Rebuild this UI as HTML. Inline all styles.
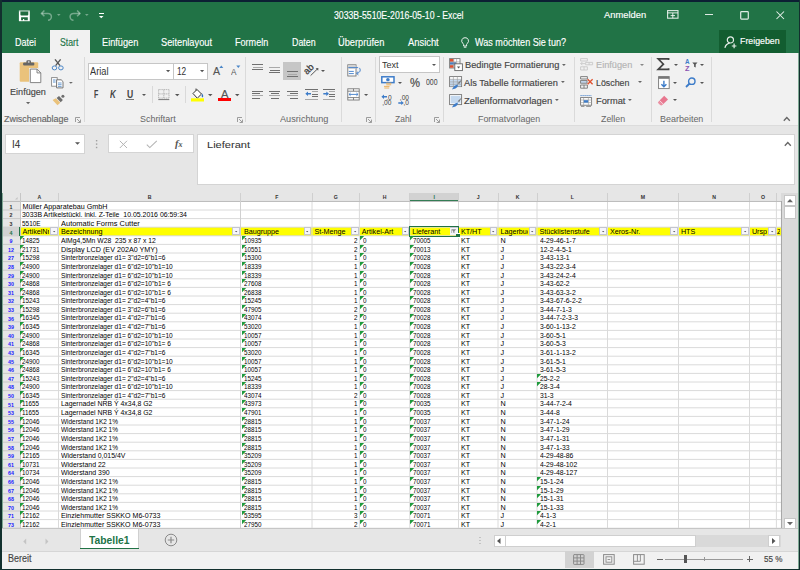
<!DOCTYPE html><html><head><meta charset="utf-8"><style>
*{margin:0;padding:0;box-sizing:border-box}
html,body{width:800px;height:570px;overflow:hidden;background:#217346;font-family:"Liberation Sans",sans-serif}
.a{position:absolute}
.t{position:absolute;white-space:nowrap;line-height:1;transform-origin:0 0}
svg{position:absolute;overflow:visible}
</style></head><body>
<div class="a" style="left:0;top:0;width:800px;height:570px;overflow:hidden;background:#217346">
<div class="a" style="left:0px;top:0px;width:800px;height:53px;background:#217346;"></div>
<div class="t" style="left:334.40px;top:11px;font-size:10.25px;color:#fff;transform:scaleX(0.848);-webkit-text-stroke:0.15px currentColor;">3033B-5510E-2016-05-10 - Excel</div>
<div class="t" style="left:604.00px;top:10px;font-size:9.95px;color:#fff;transform:scaleX(0.943);-webkit-text-stroke:0.15px currentColor;">Anmelden</div>
<div class="a" style="left:50px;top:30px;width:40px;height:24px;background:#f1f1f1;"></div>
<div class="t" style="left:14.90px;top:37px;font-size:10.75px;color:#fff;transform:scaleX(0.837);-webkit-text-stroke:0.15px currentColor;">Datei</div>
<div class="t" style="left:60.20px;top:37px;font-size:10.75px;color:#217346;transform:scaleX(0.811);-webkit-text-stroke:0.15px currentColor;">Start</div>
<div class="t" style="left:101.90px;top:37px;font-size:10.75px;color:#fff;transform:scaleX(0.857);-webkit-text-stroke:0.15px currentColor;">Einfügen</div>
<div class="t" style="left:160.80px;top:37px;font-size:10.75px;color:#fff;transform:scaleX(0.863);-webkit-text-stroke:0.15px currentColor;">Seitenlayout</div>
<div class="t" style="left:234.80px;top:37px;font-size:10.75px;color:#fff;transform:scaleX(0.844);-webkit-text-stroke:0.15px currentColor;">Formeln</div>
<div class="t" style="left:291.80px;top:37px;font-size:10.75px;color:#fff;transform:scaleX(0.822);-webkit-text-stroke:0.15px currentColor;">Daten</div>
<div class="t" style="left:338.40px;top:37px;font-size:10.75px;color:#fff;transform:scaleX(0.861);-webkit-text-stroke:0.15px currentColor;">Überprüfen</div>
<div class="t" style="left:408.30px;top:37px;font-size:10.75px;color:#fff;transform:scaleX(0.871);-webkit-text-stroke:0.15px currentColor;">Ansicht</div>
<div class="t" style="left:475.10px;top:37px;font-size:10.75px;color:#fff;transform:scaleX(0.845);-webkit-text-stroke:0.15px currentColor;">Was möchten Sie tun?</div>
<div class="a" style="left:719px;top:30px;width:67px;height:22.5px;background:#125d30;"></div>
<div class="t" style="left:739.50px;top:36px;font-size:9.45px;color:#fff;transform:scaleX(0.933);-webkit-text-stroke:0.15px currentColor;">Freigeben</div>
<div class="a" style="left:1px;top:53px;width:798px;height:71.5px;background:#f1f1f1;"></div>
<div class="a" style="left:1px;top:124.5px;width:798px;height:1px;background:#dcdcdc;"></div>
<div class="a" style="left:1px;top:125.5px;width:798px;height:404px;background:#e6e6e6;"></div>
<div class="a" style="left:5.25px;top:134px;width:79.75px;height:19.5px;background:#fff;border:1px solid #d4d4d4"></div>
<div class="t" style="left:11.50px;top:140px;font-size:10.15px;color:#333;transform:scaleX(0.973);-webkit-text-stroke:0.15px currentColor;-webkit-text-stroke:0.05px currentColor;">I4</div>
<div class="a" style="left:108.4px;top:134.4px;width:85.9px;height:19.1px;background:#fff;border:1px solid #d4d4d4"></div>
<div class="a" style="left:197.1px;top:134.4px;width:598px;height:51px;background:#fff;border:1px solid #d4d4d4"></div>
<div class="t" style="left:206.80px;top:140px;font-size:9.5px;color:#333;transform:scaleX(1.166);-webkit-text-stroke:0.15px currentColor;-webkit-text-stroke:0.05px currentColor;">Lieferant</div>
<svg style="left:74.5px;top:142px" width="6" height="4"><path d="M0 0.3H5L2.5 2.8Z" fill="#555"/></svg>
<svg style="left:95px;top:139px" width="4" height="11"><rect x="0.9" y="1" width="1.4" height="1.4" fill="#a0a0a0"/><rect x="0.9" y="4.4" width="1.4" height="1.4" fill="#a0a0a0"/><rect x="0.9" y="7.8" width="1.4" height="1.4" fill="#a0a0a0"/></svg>
<svg style="left:119px;top:139.8px" width="10" height="9"><path d="M0.8 0.8L8 8M8 0.8L0.8 8" stroke="#b4b4b4" stroke-width="1"/></svg>
<svg style="left:146px;top:139.8px" width="12" height="9"><path d="M0.8 4.6L3.8 7.6L10.8 0.8" fill="none" stroke="#b4b4b4" stroke-width="1.1"/></svg>
<div class="t" style="left:175px;top:139px;font-family:Liberation Serif;font-style:italic;font-weight:bold;font-size:10.5px;color:#555">f<span style="font-size:8px">x</span></div>
<div class="a" style="left:2px;top:193px;width:781px;height:8.4px;background:#e6e6e6;"></div>
<div class="a" style="left:409.8px;top:193px;width:48.69999999999999px;height:8.4px;background:#d2d2d2;"></div>
<div class="a" style="left:409.8px;top:199.6px;width:48.69999999999999px;height:1.8px;background:#217346;"></div>
<div class="a" style="left:2px;top:201.4px;width:18px;height:326.80000000000007px;background:#e6e6e6;"></div>
<div class="a" style="left:20px;top:201.4px;width:762.5px;height:326.80000000000007px;background:#fff;"></div>
<div class="a" style="left:20px;top:227.2px;width:762.5px;height:8.6px;background:#ffff00;"></div>
<svg style="left:0;top:0" width="800" height="570"><path d="M20 201.40H782.4M20 210.00H782.4M20 218.60H782.4M20 227.20H782.4M20 235.80H782.4M20 244.40H782.4M20 253.00H782.4M20 261.60H782.4M20 270.20H782.4M20 278.80H782.4M20 287.40H782.4M20 296.00H782.4M20 304.60H782.4M20 313.20H782.4M20 321.80H782.4M20 330.40H782.4M20 339.00H782.4M20 347.60H782.4M20 356.20H782.4M20 364.80H782.4M20 373.40H782.4M20 382.00H782.4M20 390.60H782.4M20 399.20H782.4M20 407.80H782.4M20 416.40H782.4M20 425.00H782.4M20 433.60H782.4M20 442.20H782.4M20 450.80H782.4M20 459.40H782.4M20 468.00H782.4M20 476.60H782.4M20 485.20H782.4M20 493.80H782.4M20 502.40H782.4M20 511.00H782.4M20 519.60H782.4M20 528.20H782.4M58.50 218.60V528.20M240.50 201.40V528.20M312.00 201.40V528.20M359.40 201.40V528.20M409.80 201.40V528.20M458.50 201.40V528.20M498.00 201.40V528.20M537.00 201.40V528.20M607.50 201.40V528.20M678.50 201.40V528.20M749.50 201.40V528.20M776.40 201.40V528.20M781.40 201.40V528.20" stroke="#dadada" stroke-width="1" fill="none"/><path d="M2 201.40H20M2 210.00H20M2 218.60H20M2 227.20H20M2 235.80H20M2 244.40H20M2 253.00H20M2 261.60H20M2 270.20H20M2 278.80H20M2 287.40H20M2 296.00H20M2 304.60H20M2 313.20H20M2 321.80H20M2 330.40H20M2 339.00H20M2 347.60H20M2 356.20H20M2 364.80H20M2 373.40H20M2 382.00H20M2 390.60H20M2 399.20H20M2 407.80H20M2 416.40H20M2 425.00H20M2 433.60H20M2 442.20H20M2 450.80H20M2 459.40H20M2 468.00H20M2 476.60H20M2 485.20H20M2 493.80H20M2 502.40H20M2 511.00H20M2 519.60H20M2 528.20H20" stroke="#c8c8c8" stroke-width="1" fill="none"/></svg>
<div class="a" style="left:2px;top:200.80px;width:779.4px;height:1.2px;background:#bdbdbd"></div>
<div class="a" style="left:19.5px;top:193px;width:1px;height:335.2px;background:#c6c6c6"></div>
<div class="a" style="left:58.0px;top:193px;width:1px;height:8.4px;background:#cfcfcf"></div>
<div class="a" style="left:240.0px;top:193px;width:1px;height:8.4px;background:#cfcfcf"></div>
<div class="a" style="left:311.5px;top:193px;width:1px;height:8.4px;background:#cfcfcf"></div>
<div class="a" style="left:358.9px;top:193px;width:1px;height:8.4px;background:#cfcfcf"></div>
<div class="a" style="left:409.3px;top:193px;width:1px;height:8.4px;background:#cfcfcf"></div>
<div class="a" style="left:458.0px;top:193px;width:1px;height:8.4px;background:#cfcfcf"></div>
<div class="a" style="left:497.5px;top:193px;width:1px;height:8.4px;background:#cfcfcf"></div>
<div class="a" style="left:536.5px;top:193px;width:1px;height:8.4px;background:#cfcfcf"></div>
<div class="a" style="left:607.0px;top:193px;width:1px;height:8.4px;background:#cfcfcf"></div>
<div class="a" style="left:678.0px;top:193px;width:1px;height:8.4px;background:#cfcfcf"></div>
<div class="a" style="left:749.0px;top:193px;width:1px;height:8.4px;background:#cfcfcf"></div>
<div class="a" style="left:775.9px;top:193px;width:1px;height:8.4px;background:#cfcfcf"></div>
<div class="a" style="left:780.9px;top:193px;width:1px;height:8.4px;background:#cfcfcf"></div>
<div class="a" style="left:240px;top:193px;width:1px;height:335.2px;background:#d0d0d0"></div>
<div class="a" style="left:2px;top:227.7px;width:17.5px;height:7.6px;background:#d2d2d2;"></div>
<div class="a" style="left:18.5px;top:227.2px;width:1.5px;height:8.6px;background:#217346;"></div>
<svg style="left:15px;top:196.5px" width="4" height="4"><path d="M2.6 0V2.6H0Z" fill="#c4c4c4"/></svg>
<div class="a" style="left:1.5px;top:193px;width:0.6px;height:376px;background:#7fa894;"></div>
<div class="t" style="left:37.38px;top:195px;font-size:5.2px;color:#333;font-weight:bold;">A</div>
<div class="t" style="left:147.63px;top:195px;font-size:5.2px;color:#333;font-weight:bold;">B</div>
<div class="t" style="left:275.16px;top:195px;font-size:5.2px;color:#333;font-weight:bold;">F</div>
<div class="t" style="left:333.67px;top:195px;font-size:5.2px;color:#333;font-weight:bold;">G</div>
<div class="t" style="left:382.73px;top:195px;font-size:5.2px;color:#333;font-weight:bold;">H</div>
<div class="t" style="left:433.42px;top:195px;font-size:5.2px;color:#217346;font-weight:bold;">I</div>
<div class="t" style="left:476.81px;top:195px;font-size:5.2px;color:#333;font-weight:bold;">J</div>
<div class="t" style="left:515.63px;top:195px;font-size:5.2px;color:#333;font-weight:bold;">K</div>
<div class="t" style="left:570.66px;top:195px;font-size:5.2px;color:#333;font-weight:bold;">L</div>
<div class="t" style="left:640.83px;top:195px;font-size:5.2px;color:#333;font-weight:bold;">M</div>
<div class="t" style="left:712.13px;top:195px;font-size:5.2px;color:#333;font-weight:bold;">N</div>
<div class="t" style="left:760.92px;top:195px;font-size:5.2px;color:#333;font-weight:bold;">O</div>
<div class="t" style="left:9.53px;top:205px;font-size:5.3px;color:#333;font-weight:bold;">1</div>
<div class="t" style="left:9.53px;top:213px;font-size:5.3px;color:#333;font-weight:bold;">2</div>
<div class="t" style="left:9.53px;top:222px;font-size:5.3px;color:#333;font-weight:bold;">3</div>
<div class="t" style="left:9.53px;top:231px;font-size:5.3px;color:#217346;font-weight:bold;">4</div>
<div class="t" style="left:9.53px;top:239px;font-size:5.3px;color:#1a1aff;font-weight:bold;">9</div>
<div class="t" style="left:8.06px;top:248px;font-size:5.3px;color:#1a1aff;font-weight:bold;">12</div>
<div class="t" style="left:8.06px;top:256px;font-size:5.3px;color:#1a1aff;font-weight:bold;">27</div>
<div class="t" style="left:8.06px;top:265px;font-size:5.3px;color:#1a1aff;font-weight:bold;">28</div>
<div class="t" style="left:8.06px;top:274px;font-size:5.3px;color:#1a1aff;font-weight:bold;">29</div>
<div class="t" style="left:8.06px;top:282px;font-size:5.3px;color:#1a1aff;font-weight:bold;">30</div>
<div class="t" style="left:8.06px;top:291px;font-size:5.3px;color:#1a1aff;font-weight:bold;">31</div>
<div class="t" style="left:8.06px;top:299px;font-size:5.3px;color:#1a1aff;font-weight:bold;">32</div>
<div class="t" style="left:8.06px;top:308px;font-size:5.3px;color:#1a1aff;font-weight:bold;">33</div>
<div class="t" style="left:8.06px;top:317px;font-size:5.3px;color:#1a1aff;font-weight:bold;">36</div>
<div class="t" style="left:8.06px;top:325px;font-size:5.3px;color:#1a1aff;font-weight:bold;">39</div>
<div class="t" style="left:8.06px;top:334px;font-size:5.3px;color:#1a1aff;font-weight:bold;">40</div>
<div class="t" style="left:8.06px;top:342px;font-size:5.3px;color:#1a1aff;font-weight:bold;">41</div>
<div class="t" style="left:8.06px;top:351px;font-size:5.3px;color:#1a1aff;font-weight:bold;">43</div>
<div class="t" style="left:8.06px;top:360px;font-size:5.3px;color:#1a1aff;font-weight:bold;">45</div>
<div class="t" style="left:8.06px;top:368px;font-size:5.3px;color:#1a1aff;font-weight:bold;">46</div>
<div class="t" style="left:8.06px;top:377px;font-size:5.3px;color:#1a1aff;font-weight:bold;">47</div>
<div class="t" style="left:8.06px;top:385px;font-size:5.3px;color:#1a1aff;font-weight:bold;">48</div>
<div class="t" style="left:8.06px;top:394px;font-size:5.3px;color:#1a1aff;font-weight:bold;">50</div>
<div class="t" style="left:8.06px;top:403px;font-size:5.3px;color:#1a1aff;font-weight:bold;">51</div>
<div class="t" style="left:8.06px;top:411px;font-size:5.3px;color:#1a1aff;font-weight:bold;">53</div>
<div class="t" style="left:8.06px;top:420px;font-size:5.3px;color:#1a1aff;font-weight:bold;">55</div>
<div class="t" style="left:8.06px;top:428px;font-size:5.3px;color:#1a1aff;font-weight:bold;">56</div>
<div class="t" style="left:8.06px;top:437px;font-size:5.3px;color:#1a1aff;font-weight:bold;">57</div>
<div class="t" style="left:8.06px;top:446px;font-size:5.3px;color:#1a1aff;font-weight:bold;">58</div>
<div class="t" style="left:8.06px;top:454px;font-size:5.3px;color:#1a1aff;font-weight:bold;">59</div>
<div class="t" style="left:8.06px;top:463px;font-size:5.3px;color:#1a1aff;font-weight:bold;">61</div>
<div class="t" style="left:8.06px;top:471px;font-size:5.3px;color:#1a1aff;font-weight:bold;">64</div>
<div class="t" style="left:8.06px;top:480px;font-size:5.3px;color:#1a1aff;font-weight:bold;">66</div>
<div class="t" style="left:8.06px;top:489px;font-size:5.3px;color:#1a1aff;font-weight:bold;">67</div>
<div class="t" style="left:8.06px;top:497px;font-size:5.3px;color:#1a1aff;font-weight:bold;">68</div>
<div class="t" style="left:8.06px;top:506px;font-size:5.3px;color:#1a1aff;font-weight:bold;">70</div>
<div class="t" style="left:8.06px;top:514px;font-size:5.3px;color:#1a1aff;font-weight:bold;">71</div>
<div class="t" style="left:8.06px;top:523px;font-size:5.3px;color:#1a1aff;font-weight:bold;">73</div>
<div class="t" style="left:22.40px;top:203px;font-size:7.2px;color:#000;">Müller Apparatebau GmbH</div>
<div class="t" style="left:22.40px;top:211px;font-size:7.2px;color:#000;transform:scaleX(0.964);">3033B Artikelstückl. inkl. Z-Teile&nbsp; 10.05.2016 06:59:34</div>
<div class="t" style="left:22.40px;top:220px;font-size:7.2px;color:#000;transform:scaleX(0.894);">5510E</div>
<div class="t" style="left:61.00px;top:220px;font-size:7.2px;color:#000;transform:scaleX(1.039);">Automatic Forms Cutter</div>
<div class="a" style="left:20px;top:227.20px;width:29.00px;height:8.60px;overflow:hidden">
<div class="t" style="left:2.40px;top:1px;font-size:7.2px;color:#000;">ArtikelNr</div>
</div>
<div class="a" style="left:50.30px;top:226.80px;width:7.5px;height:8.6px;background:#f6f6fa;border:0.8px solid #c4c6d0"></div>
<svg style="left:52.90px;top:230.80px" width="3" height="2"><path d="M0 0H2.4L1.2 1.3Z" fill="#555"/></svg>
<div class="a" style="left:58.5px;top:227.20px;width:172.50px;height:8.60px;overflow:hidden">
<div class="t" style="left:2.40px;top:1px;font-size:7.2px;color:#000;">Bezeichnung</div>
</div>
<div class="a" style="left:232.30px;top:226.80px;width:7.5px;height:8.6px;background:#f6f6fa;border:0.8px solid #c4c6d0"></div>
<svg style="left:234.90px;top:230.80px" width="3" height="2"><path d="M0 0H2.4L1.2 1.3Z" fill="#555"/></svg>
<div class="a" style="left:241.5px;top:227.20px;width:61.00px;height:8.60px;overflow:hidden">
<div class="t" style="left:2.40px;top:1px;font-size:7.2px;color:#000;">Baugruppe</div>
</div>
<div class="a" style="left:303.80px;top:226.80px;width:7.5px;height:8.6px;background:#f6f6fa;border:0.8px solid #c4c6d0"></div>
<svg style="left:306.40px;top:230.80px" width="3" height="2"><path d="M0 0H2.4L1.2 1.3Z" fill="#555"/></svg>
<div class="a" style="left:312px;top:227.20px;width:37.90px;height:8.60px;overflow:hidden">
<div class="t" style="left:2.40px;top:1px;font-size:7.2px;color:#000;">St-Menge</div>
</div>
<div class="a" style="left:351.20px;top:226.80px;width:7.5px;height:8.6px;background:#f6f6fa;border:0.8px solid #c4c6d0"></div>
<svg style="left:353.80px;top:230.80px" width="3" height="2"><path d="M0 0H2.4L1.2 1.3Z" fill="#555"/></svg>
<div class="a" style="left:359.4px;top:227.20px;width:40.90px;height:8.60px;overflow:hidden">
<div class="t" style="left:2.40px;top:1px;font-size:7.2px;color:#000;">Artikel-Art</div>
</div>
<div class="a" style="left:401.60px;top:226.80px;width:7.5px;height:8.6px;background:#f6f6fa;border:0.8px solid #c4c6d0"></div>
<svg style="left:404.20px;top:230.80px" width="3" height="2"><path d="M0 0H2.4L1.2 1.3Z" fill="#555"/></svg>
<div class="a" style="left:409.8px;top:227.20px;width:39.20px;height:8.60px;overflow:hidden">
<div class="t" style="left:2.40px;top:1px;font-size:7.2px;color:#000;">Lieferant</div>
</div>
<div class="a" style="left:450.30px;top:226.80px;width:7.5px;height:8.6px;background:#f6f6fa;border:0.8px solid #c4c6d0"></div>
<div class="a" style="left:449.5px;top:227.6px;width:8px;height:7.4px;background:#f4f4f8"></div>
<svg style="left:451px;top:229px" width="6" height="5"><path d="M0.3 0.3H5.2L3.4 2.2V4.2L2.2 3.6V2.2Z" fill="#888"/><path d="M0.6 0.6V4" stroke="#aaa" stroke-width="0.8"/></svg>
<div class="a" style="left:458.5px;top:227.20px;width:30.00px;height:8.60px;overflow:hidden">
<div class="t" style="left:2.40px;top:1px;font-size:7.2px;color:#000;">KT/HT</div>
</div>
<div class="a" style="left:489.80px;top:226.80px;width:7.5px;height:8.6px;background:#f6f6fa;border:0.8px solid #c4c6d0"></div>
<svg style="left:492.40px;top:230.80px" width="3" height="2"><path d="M0 0H2.4L1.2 1.3Z" fill="#555"/></svg>
<div class="a" style="left:498px;top:227.20px;width:29.50px;height:8.60px;overflow:hidden">
<div class="t" style="left:2.40px;top:1px;font-size:7.2px;color:#000;">Lagerbuch</div>
</div>
<div class="a" style="left:528.80px;top:226.80px;width:7.5px;height:8.6px;background:#f6f6fa;border:0.8px solid #c4c6d0"></div>
<svg style="left:531.40px;top:230.80px" width="3" height="2"><path d="M0 0H2.4L1.2 1.3Z" fill="#555"/></svg>
<div class="a" style="left:537px;top:227.20px;width:61.00px;height:8.60px;overflow:hidden">
<div class="t" style="left:2.40px;top:1px;font-size:7.2px;color:#000;">Stücklistenstufe</div>
</div>
<div class="a" style="left:599.30px;top:226.80px;width:7.5px;height:8.6px;background:#f6f6fa;border:0.8px solid #c4c6d0"></div>
<svg style="left:601.90px;top:230.80px" width="3" height="2"><path d="M0 0H2.4L1.2 1.3Z" fill="#555"/></svg>
<div class="a" style="left:607.5px;top:227.20px;width:61.50px;height:8.60px;overflow:hidden">
<div class="t" style="left:2.40px;top:1px;font-size:7.2px;color:#000;">Xeros-Nr.</div>
</div>
<div class="a" style="left:670.30px;top:226.80px;width:7.5px;height:8.6px;background:#f6f6fa;border:0.8px solid #c4c6d0"></div>
<svg style="left:672.90px;top:230.80px" width="3" height="2"><path d="M0 0H2.4L1.2 1.3Z" fill="#555"/></svg>
<div class="a" style="left:678.5px;top:227.20px;width:61.50px;height:8.60px;overflow:hidden">
<div class="t" style="left:2.40px;top:1px;font-size:7.2px;color:#000;">HTS</div>
</div>
<div class="a" style="left:741.30px;top:226.80px;width:7.5px;height:8.6px;background:#f6f6fa;border:0.8px solid #c4c6d0"></div>
<svg style="left:743.90px;top:230.80px" width="3" height="2"><path d="M0 0H2.4L1.2 1.3Z" fill="#555"/></svg>
<div class="a" style="left:749.5px;top:227.20px;width:17.40px;height:8.60px;overflow:hidden">
<div class="t" style="left:2.40px;top:1px;font-size:7.2px;color:#000;">Ursprung</div>
</div>
<div class="a" style="left:768.20px;top:226.80px;width:7.5px;height:8.6px;background:#f6f6fa;border:0.8px solid #c4c6d0"></div>
<svg style="left:770.80px;top:230.80px" width="3" height="2"><path d="M0 0H2.4L1.2 1.3Z" fill="#555"/></svg>
<div class="a" style="left:776.4px;top:227.20px;width:4.00px;height:8.60px;overflow:hidden">
<div class="t" style="left:0.60px;top:1px;font-size:7.2px;color:#000;">Zolltarif</div>
</div>
<div class="a" style="left:409.20px;top:226px;width:49.90px;height:10.7px;border:1.1px solid #217346"></div>
<div class="a" style="left:455.6px;top:233.3px;width:4.6px;height:4.6px;background:#fff"></div>
<div class="a" style="left:456.1px;top:233.75px;width:3.8px;height:3.7px;background:#217346"></div>
<svg style="left:20.2px;top:236.10px" width="5" height="5"><path d="M0 0H4.2L0 4.2Z" fill="#1e9a3c"/></svg>
<div class="t" style="left:22.40px;top:237px;font-size:7.2px;color:#000;transform:scaleX(0.875);">14825</div>
<div class="t" style="left:61.00px;top:237px;font-size:7.2px;color:#000;transform:scaleX(0.946);">AlMg4,5Mn W28&nbsp; 235 x 87 x 12</div>
<svg style="left:241.7px;top:236.10px" width="5" height="5"><path d="M0 0H4.2L0 4.2Z" fill="#1e9a3c"/></svg>
<div class="t" style="left:243.50px;top:237px;font-size:7.2px;color:#000;transform:scaleX(0.875);">10935</div>
<div class="t" style="left:354.40px;top:237px;font-size:7.2px;color:#000;transform:scaleX(0.875);">2</div>
<svg style="left:359.59999999999997px;top:236.10px" width="5" height="5"><path d="M0 0H4.2L0 4.2Z" fill="#1e9a3c"/></svg>
<div class="t" style="left:362.50px;top:237px;font-size:7.2px;color:#000;transform:scaleX(0.875);">0</div>
<svg style="left:410.0px;top:236.10px" width="5" height="5"><path d="M0 0H4.2L0 4.2Z" fill="#1e9a3c"/></svg>
<div class="t" style="left:412.50px;top:237px;font-size:7.2px;color:#000;transform:scaleX(0.875);">70005</div>
<div class="t" style="left:461.00px;top:237px;font-size:7.2px;color:#000;">KT</div>
<div class="t" style="left:500.50px;top:237px;font-size:7.2px;color:#000;">N</div>
<div class="t" style="left:539.50px;top:237px;font-size:7.2px;color:#000;transform:scaleX(0.950);">4-29-46-1-7</div>
<svg style="left:20.2px;top:244.70px" width="5" height="5"><path d="M0 0H4.2L0 4.2Z" fill="#1e9a3c"/></svg>
<div class="t" style="left:22.40px;top:246px;font-size:7.2px;color:#000;transform:scaleX(0.875);">21731</div>
<div class="t" style="left:61.00px;top:246px;font-size:7.2px;color:#000;">Display LCD (EV 202A0 YMY)</div>
<svg style="left:241.7px;top:244.70px" width="5" height="5"><path d="M0 0H4.2L0 4.2Z" fill="#1e9a3c"/></svg>
<div class="t" style="left:243.50px;top:246px;font-size:7.2px;color:#000;transform:scaleX(0.875);">10551</div>
<div class="t" style="left:354.40px;top:246px;font-size:7.2px;color:#000;transform:scaleX(0.875);">2</div>
<svg style="left:359.59999999999997px;top:244.70px" width="5" height="5"><path d="M0 0H4.2L0 4.2Z" fill="#1e9a3c"/></svg>
<div class="t" style="left:362.50px;top:246px;font-size:7.2px;color:#000;transform:scaleX(0.875);">0</div>
<svg style="left:410.0px;top:244.70px" width="5" height="5"><path d="M0 0H4.2L0 4.2Z" fill="#1e9a3c"/></svg>
<div class="t" style="left:412.50px;top:246px;font-size:7.2px;color:#000;transform:scaleX(0.875);">70013</div>
<div class="t" style="left:461.00px;top:246px;font-size:7.2px;color:#000;">KT</div>
<div class="t" style="left:500.50px;top:246px;font-size:7.2px;color:#000;">J</div>
<div class="t" style="left:539.50px;top:246px;font-size:7.2px;color:#000;transform:scaleX(0.950);">12-2-4-5-1</div>
<svg style="left:20.2px;top:253.30px" width="5" height="5"><path d="M0 0H4.2L0 4.2Z" fill="#1e9a3c"/></svg>
<div class="t" style="left:22.40px;top:254px;font-size:7.2px;color:#000;transform:scaleX(0.875);">15298</div>
<div class="t" style="left:61.00px;top:254px;font-size:7.2px;color:#000;transform:scaleX(0.913);">Sinterbronzelager d1= 3"d2=6"b1=6</div>
<svg style="left:241.7px;top:253.30px" width="5" height="5"><path d="M0 0H4.2L0 4.2Z" fill="#1e9a3c"/></svg>
<div class="t" style="left:243.50px;top:254px;font-size:7.2px;color:#000;transform:scaleX(0.875);">15300</div>
<div class="t" style="left:354.40px;top:254px;font-size:7.2px;color:#000;transform:scaleX(0.875);">1</div>
<svg style="left:359.59999999999997px;top:253.30px" width="5" height="5"><path d="M0 0H4.2L0 4.2Z" fill="#1e9a3c"/></svg>
<div class="t" style="left:362.50px;top:254px;font-size:7.2px;color:#000;transform:scaleX(0.875);">0</div>
<svg style="left:410.0px;top:253.30px" width="5" height="5"><path d="M0 0H4.2L0 4.2Z" fill="#1e9a3c"/></svg>
<div class="t" style="left:412.50px;top:254px;font-size:7.2px;color:#000;transform:scaleX(0.875);">70028</div>
<div class="t" style="left:461.00px;top:254px;font-size:7.2px;color:#000;">KT</div>
<div class="t" style="left:500.50px;top:254px;font-size:7.2px;color:#000;">J</div>
<div class="t" style="left:539.50px;top:254px;font-size:7.2px;color:#000;transform:scaleX(0.950);">3-43-13-1</div>
<svg style="left:20.2px;top:261.90px" width="5" height="5"><path d="M0 0H4.2L0 4.2Z" fill="#1e9a3c"/></svg>
<div class="t" style="left:22.40px;top:263px;font-size:7.2px;color:#000;transform:scaleX(0.875);">24900</div>
<div class="t" style="left:61.00px;top:263px;font-size:7.2px;color:#000;transform:scaleX(0.913);">Sinterbronzelager d1= 6"d2=10"b1=10</div>
<svg style="left:241.7px;top:261.90px" width="5" height="5"><path d="M0 0H4.2L0 4.2Z" fill="#1e9a3c"/></svg>
<div class="t" style="left:243.50px;top:263px;font-size:7.2px;color:#000;transform:scaleX(0.875);">18339</div>
<div class="t" style="left:354.40px;top:263px;font-size:7.2px;color:#000;transform:scaleX(0.875);">1</div>
<svg style="left:359.59999999999997px;top:261.90px" width="5" height="5"><path d="M0 0H4.2L0 4.2Z" fill="#1e9a3c"/></svg>
<div class="t" style="left:362.50px;top:263px;font-size:7.2px;color:#000;transform:scaleX(0.875);">0</div>
<svg style="left:410.0px;top:261.90px" width="5" height="5"><path d="M0 0H4.2L0 4.2Z" fill="#1e9a3c"/></svg>
<div class="t" style="left:412.50px;top:263px;font-size:7.2px;color:#000;transform:scaleX(0.875);">70028</div>
<div class="t" style="left:461.00px;top:263px;font-size:7.2px;color:#000;">KT</div>
<div class="t" style="left:500.50px;top:263px;font-size:7.2px;color:#000;">J</div>
<div class="t" style="left:539.50px;top:263px;font-size:7.2px;color:#000;transform:scaleX(0.950);">3-43-22-3-4</div>
<svg style="left:20.2px;top:270.50px" width="5" height="5"><path d="M0 0H4.2L0 4.2Z" fill="#1e9a3c"/></svg>
<div class="t" style="left:22.40px;top:272px;font-size:7.2px;color:#000;transform:scaleX(0.875);">24900</div>
<div class="t" style="left:61.00px;top:272px;font-size:7.2px;color:#000;transform:scaleX(0.913);">Sinterbronzelager d1= 6"d2=10"b1=10</div>
<svg style="left:241.7px;top:270.50px" width="5" height="5"><path d="M0 0H4.2L0 4.2Z" fill="#1e9a3c"/></svg>
<div class="t" style="left:243.50px;top:272px;font-size:7.2px;color:#000;transform:scaleX(0.875);">18339</div>
<div class="t" style="left:354.40px;top:272px;font-size:7.2px;color:#000;transform:scaleX(0.875);">1</div>
<svg style="left:359.59999999999997px;top:270.50px" width="5" height="5"><path d="M0 0H4.2L0 4.2Z" fill="#1e9a3c"/></svg>
<div class="t" style="left:362.50px;top:272px;font-size:7.2px;color:#000;transform:scaleX(0.875);">0</div>
<svg style="left:410.0px;top:270.50px" width="5" height="5"><path d="M0 0H4.2L0 4.2Z" fill="#1e9a3c"/></svg>
<div class="t" style="left:412.50px;top:272px;font-size:7.2px;color:#000;transform:scaleX(0.875);">70028</div>
<div class="t" style="left:461.00px;top:272px;font-size:7.2px;color:#000;">KT</div>
<div class="t" style="left:500.50px;top:272px;font-size:7.2px;color:#000;">J</div>
<div class="t" style="left:539.50px;top:272px;font-size:7.2px;color:#000;transform:scaleX(0.950);">3-43-24-2-4</div>
<svg style="left:20.2px;top:279.10px" width="5" height="5"><path d="M0 0H4.2L0 4.2Z" fill="#1e9a3c"/></svg>
<div class="t" style="left:22.40px;top:280px;font-size:7.2px;color:#000;transform:scaleX(0.875);">24868</div>
<div class="t" style="left:61.00px;top:280px;font-size:7.2px;color:#000;transform:scaleX(0.913);">Sinterbronzelager d1= 6"d2=10"b1= 6</div>
<svg style="left:241.7px;top:279.10px" width="5" height="5"><path d="M0 0H4.2L0 4.2Z" fill="#1e9a3c"/></svg>
<div class="t" style="left:243.50px;top:280px;font-size:7.2px;color:#000;transform:scaleX(0.875);">27608</div>
<div class="t" style="left:354.40px;top:280px;font-size:7.2px;color:#000;transform:scaleX(0.875);">1</div>
<svg style="left:359.59999999999997px;top:279.10px" width="5" height="5"><path d="M0 0H4.2L0 4.2Z" fill="#1e9a3c"/></svg>
<div class="t" style="left:362.50px;top:280px;font-size:7.2px;color:#000;transform:scaleX(0.875);">0</div>
<svg style="left:410.0px;top:279.10px" width="5" height="5"><path d="M0 0H4.2L0 4.2Z" fill="#1e9a3c"/></svg>
<div class="t" style="left:412.50px;top:280px;font-size:7.2px;color:#000;transform:scaleX(0.875);">70028</div>
<div class="t" style="left:461.00px;top:280px;font-size:7.2px;color:#000;">KT</div>
<div class="t" style="left:500.50px;top:280px;font-size:7.2px;color:#000;">J</div>
<div class="t" style="left:539.50px;top:280px;font-size:7.2px;color:#000;transform:scaleX(0.950);">3-43-62-2</div>
<svg style="left:20.2px;top:287.70px" width="5" height="5"><path d="M0 0H4.2L0 4.2Z" fill="#1e9a3c"/></svg>
<div class="t" style="left:22.40px;top:289px;font-size:7.2px;color:#000;transform:scaleX(0.875);">24868</div>
<div class="t" style="left:61.00px;top:289px;font-size:7.2px;color:#000;transform:scaleX(0.913);">Sinterbronzelager d1= 6"d2=10"b1= 6</div>
<svg style="left:241.7px;top:287.70px" width="5" height="5"><path d="M0 0H4.2L0 4.2Z" fill="#1e9a3c"/></svg>
<div class="t" style="left:243.50px;top:289px;font-size:7.2px;color:#000;transform:scaleX(0.875);">26838</div>
<div class="t" style="left:354.40px;top:289px;font-size:7.2px;color:#000;transform:scaleX(0.875);">1</div>
<svg style="left:359.59999999999997px;top:287.70px" width="5" height="5"><path d="M0 0H4.2L0 4.2Z" fill="#1e9a3c"/></svg>
<div class="t" style="left:362.50px;top:289px;font-size:7.2px;color:#000;transform:scaleX(0.875);">0</div>
<svg style="left:410.0px;top:287.70px" width="5" height="5"><path d="M0 0H4.2L0 4.2Z" fill="#1e9a3c"/></svg>
<div class="t" style="left:412.50px;top:289px;font-size:7.2px;color:#000;transform:scaleX(0.875);">70028</div>
<div class="t" style="left:461.00px;top:289px;font-size:7.2px;color:#000;">KT</div>
<div class="t" style="left:500.50px;top:289px;font-size:7.2px;color:#000;">J</div>
<div class="t" style="left:539.50px;top:289px;font-size:7.2px;color:#000;transform:scaleX(0.950);">3-43-63-3-2</div>
<svg style="left:20.2px;top:296.30px" width="5" height="5"><path d="M0 0H4.2L0 4.2Z" fill="#1e9a3c"/></svg>
<div class="t" style="left:22.40px;top:297px;font-size:7.2px;color:#000;transform:scaleX(0.875);">15243</div>
<div class="t" style="left:61.00px;top:297px;font-size:7.2px;color:#000;transform:scaleX(0.913);">Sinterbronzelager d1= 2"d2=4"b1=6</div>
<svg style="left:241.7px;top:296.30px" width="5" height="5"><path d="M0 0H4.2L0 4.2Z" fill="#1e9a3c"/></svg>
<div class="t" style="left:243.50px;top:297px;font-size:7.2px;color:#000;transform:scaleX(0.875);">15245</div>
<div class="t" style="left:354.40px;top:297px;font-size:7.2px;color:#000;transform:scaleX(0.875);">1</div>
<svg style="left:359.59999999999997px;top:296.30px" width="5" height="5"><path d="M0 0H4.2L0 4.2Z" fill="#1e9a3c"/></svg>
<div class="t" style="left:362.50px;top:297px;font-size:7.2px;color:#000;transform:scaleX(0.875);">0</div>
<svg style="left:410.0px;top:296.30px" width="5" height="5"><path d="M0 0H4.2L0 4.2Z" fill="#1e9a3c"/></svg>
<div class="t" style="left:412.50px;top:297px;font-size:7.2px;color:#000;transform:scaleX(0.875);">70028</div>
<div class="t" style="left:461.00px;top:297px;font-size:7.2px;color:#000;">KT</div>
<div class="t" style="left:500.50px;top:297px;font-size:7.2px;color:#000;">J</div>
<div class="t" style="left:539.50px;top:297px;font-size:7.2px;color:#000;transform:scaleX(0.950);">3-43-67-6-2-2</div>
<svg style="left:20.2px;top:304.90px" width="5" height="5"><path d="M0 0H4.2L0 4.2Z" fill="#1e9a3c"/></svg>
<div class="t" style="left:22.40px;top:306px;font-size:7.2px;color:#000;transform:scaleX(0.875);">15298</div>
<div class="t" style="left:61.00px;top:306px;font-size:7.2px;color:#000;transform:scaleX(0.913);">Sinterbronzelager d1= 3"d2=6"b1=6</div>
<svg style="left:241.7px;top:304.90px" width="5" height="5"><path d="M0 0H4.2L0 4.2Z" fill="#1e9a3c"/></svg>
<div class="t" style="left:243.50px;top:306px;font-size:7.2px;color:#000;transform:scaleX(0.875);">47905</div>
<div class="t" style="left:354.40px;top:306px;font-size:7.2px;color:#000;transform:scaleX(0.875);">2</div>
<svg style="left:359.59999999999997px;top:304.90px" width="5" height="5"><path d="M0 0H4.2L0 4.2Z" fill="#1e9a3c"/></svg>
<div class="t" style="left:362.50px;top:306px;font-size:7.2px;color:#000;transform:scaleX(0.875);">0</div>
<svg style="left:410.0px;top:304.90px" width="5" height="5"><path d="M0 0H4.2L0 4.2Z" fill="#1e9a3c"/></svg>
<div class="t" style="left:412.50px;top:306px;font-size:7.2px;color:#000;transform:scaleX(0.875);">70028</div>
<div class="t" style="left:461.00px;top:306px;font-size:7.2px;color:#000;">KT</div>
<div class="t" style="left:500.50px;top:306px;font-size:7.2px;color:#000;">J</div>
<div class="t" style="left:539.50px;top:306px;font-size:7.2px;color:#000;transform:scaleX(0.950);">3-44-7-1-3</div>
<svg style="left:20.2px;top:313.50px" width="5" height="5"><path d="M0 0H4.2L0 4.2Z" fill="#1e9a3c"/></svg>
<div class="t" style="left:22.40px;top:314px;font-size:7.2px;color:#000;transform:scaleX(0.875);">16345</div>
<div class="t" style="left:61.00px;top:314px;font-size:7.2px;color:#000;transform:scaleX(0.913);">Sinterbronzelager d1= 4"d2=7"b1=6</div>
<svg style="left:241.7px;top:313.50px" width="5" height="5"><path d="M0 0H4.2L0 4.2Z" fill="#1e9a3c"/></svg>
<div class="t" style="left:243.50px;top:314px;font-size:7.2px;color:#000;transform:scaleX(0.875);">43074</div>
<div class="t" style="left:354.40px;top:314px;font-size:7.2px;color:#000;transform:scaleX(0.875);">2</div>
<svg style="left:359.59999999999997px;top:313.50px" width="5" height="5"><path d="M0 0H4.2L0 4.2Z" fill="#1e9a3c"/></svg>
<div class="t" style="left:362.50px;top:314px;font-size:7.2px;color:#000;transform:scaleX(0.875);">0</div>
<svg style="left:410.0px;top:313.50px" width="5" height="5"><path d="M0 0H4.2L0 4.2Z" fill="#1e9a3c"/></svg>
<div class="t" style="left:412.50px;top:314px;font-size:7.2px;color:#000;transform:scaleX(0.875);">70028</div>
<div class="t" style="left:461.00px;top:314px;font-size:7.2px;color:#000;">KT</div>
<div class="t" style="left:500.50px;top:314px;font-size:7.2px;color:#000;">J</div>
<div class="t" style="left:539.50px;top:314px;font-size:7.2px;color:#000;transform:scaleX(0.950);">3-44-7-2-3-3</div>
<svg style="left:20.2px;top:322.10px" width="5" height="5"><path d="M0 0H4.2L0 4.2Z" fill="#1e9a3c"/></svg>
<div class="t" style="left:22.40px;top:323px;font-size:7.2px;color:#000;transform:scaleX(0.875);">16345</div>
<div class="t" style="left:61.00px;top:323px;font-size:7.2px;color:#000;transform:scaleX(0.913);">Sinterbronzelager d1= 4"d2=7"b1=6</div>
<svg style="left:241.7px;top:322.10px" width="5" height="5"><path d="M0 0H4.2L0 4.2Z" fill="#1e9a3c"/></svg>
<div class="t" style="left:243.50px;top:323px;font-size:7.2px;color:#000;transform:scaleX(0.875);">53020</div>
<div class="t" style="left:354.40px;top:323px;font-size:7.2px;color:#000;transform:scaleX(0.875);">1</div>
<svg style="left:359.59999999999997px;top:322.10px" width="5" height="5"><path d="M0 0H4.2L0 4.2Z" fill="#1e9a3c"/></svg>
<div class="t" style="left:362.50px;top:323px;font-size:7.2px;color:#000;transform:scaleX(0.875);">0</div>
<svg style="left:410.0px;top:322.10px" width="5" height="5"><path d="M0 0H4.2L0 4.2Z" fill="#1e9a3c"/></svg>
<div class="t" style="left:412.50px;top:323px;font-size:7.2px;color:#000;transform:scaleX(0.875);">70028</div>
<div class="t" style="left:461.00px;top:323px;font-size:7.2px;color:#000;">KT</div>
<div class="t" style="left:500.50px;top:323px;font-size:7.2px;color:#000;">J</div>
<div class="t" style="left:539.50px;top:323px;font-size:7.2px;color:#000;transform:scaleX(0.950);">3-60-1-13-2</div>
<svg style="left:20.2px;top:330.70px" width="5" height="5"><path d="M0 0H4.2L0 4.2Z" fill="#1e9a3c"/></svg>
<div class="t" style="left:22.40px;top:332px;font-size:7.2px;color:#000;transform:scaleX(0.875);">24900</div>
<div class="t" style="left:61.00px;top:332px;font-size:7.2px;color:#000;transform:scaleX(0.913);">Sinterbronzelager d1= 6"d2=10"b1=10</div>
<svg style="left:241.7px;top:330.70px" width="5" height="5"><path d="M0 0H4.2L0 4.2Z" fill="#1e9a3c"/></svg>
<div class="t" style="left:243.50px;top:332px;font-size:7.2px;color:#000;transform:scaleX(0.875);">10057</div>
<div class="t" style="left:354.40px;top:332px;font-size:7.2px;color:#000;transform:scaleX(0.875);">1</div>
<svg style="left:359.59999999999997px;top:330.70px" width="5" height="5"><path d="M0 0H4.2L0 4.2Z" fill="#1e9a3c"/></svg>
<div class="t" style="left:362.50px;top:332px;font-size:7.2px;color:#000;transform:scaleX(0.875);">0</div>
<svg style="left:410.0px;top:330.70px" width="5" height="5"><path d="M0 0H4.2L0 4.2Z" fill="#1e9a3c"/></svg>
<div class="t" style="left:412.50px;top:332px;font-size:7.2px;color:#000;transform:scaleX(0.875);">70028</div>
<div class="t" style="left:461.00px;top:332px;font-size:7.2px;color:#000;">KT</div>
<div class="t" style="left:500.50px;top:332px;font-size:7.2px;color:#000;">J</div>
<div class="t" style="left:539.50px;top:332px;font-size:7.2px;color:#000;transform:scaleX(0.950);">3-60-5-1</div>
<svg style="left:20.2px;top:339.30px" width="5" height="5"><path d="M0 0H4.2L0 4.2Z" fill="#1e9a3c"/></svg>
<div class="t" style="left:22.40px;top:340px;font-size:7.2px;color:#000;transform:scaleX(0.875);">24868</div>
<div class="t" style="left:61.00px;top:340px;font-size:7.2px;color:#000;transform:scaleX(0.913);">Sinterbronzelager d1= 6"d2=10"b1= 6</div>
<svg style="left:241.7px;top:339.30px" width="5" height="5"><path d="M0 0H4.2L0 4.2Z" fill="#1e9a3c"/></svg>
<div class="t" style="left:243.50px;top:340px;font-size:7.2px;color:#000;transform:scaleX(0.875);">10057</div>
<div class="t" style="left:354.40px;top:340px;font-size:7.2px;color:#000;transform:scaleX(0.875);">1</div>
<svg style="left:359.59999999999997px;top:339.30px" width="5" height="5"><path d="M0 0H4.2L0 4.2Z" fill="#1e9a3c"/></svg>
<div class="t" style="left:362.50px;top:340px;font-size:7.2px;color:#000;transform:scaleX(0.875);">0</div>
<svg style="left:410.0px;top:339.30px" width="5" height="5"><path d="M0 0H4.2L0 4.2Z" fill="#1e9a3c"/></svg>
<div class="t" style="left:412.50px;top:340px;font-size:7.2px;color:#000;transform:scaleX(0.875);">70028</div>
<div class="t" style="left:461.00px;top:340px;font-size:7.2px;color:#000;">KT</div>
<div class="t" style="left:500.50px;top:340px;font-size:7.2px;color:#000;">J</div>
<div class="t" style="left:539.50px;top:340px;font-size:7.2px;color:#000;transform:scaleX(0.950);">3-60-5-3</div>
<svg style="left:20.2px;top:347.90px" width="5" height="5"><path d="M0 0H4.2L0 4.2Z" fill="#1e9a3c"/></svg>
<div class="t" style="left:22.40px;top:349px;font-size:7.2px;color:#000;transform:scaleX(0.875);">16345</div>
<div class="t" style="left:61.00px;top:349px;font-size:7.2px;color:#000;transform:scaleX(0.913);">Sinterbronzelager d1= 4"d2=7"b1=6</div>
<svg style="left:241.7px;top:347.90px" width="5" height="5"><path d="M0 0H4.2L0 4.2Z" fill="#1e9a3c"/></svg>
<div class="t" style="left:243.50px;top:349px;font-size:7.2px;color:#000;transform:scaleX(0.875);">53020</div>
<div class="t" style="left:354.40px;top:349px;font-size:7.2px;color:#000;transform:scaleX(0.875);">1</div>
<svg style="left:359.59999999999997px;top:347.90px" width="5" height="5"><path d="M0 0H4.2L0 4.2Z" fill="#1e9a3c"/></svg>
<div class="t" style="left:362.50px;top:349px;font-size:7.2px;color:#000;transform:scaleX(0.875);">0</div>
<svg style="left:410.0px;top:347.90px" width="5" height="5"><path d="M0 0H4.2L0 4.2Z" fill="#1e9a3c"/></svg>
<div class="t" style="left:412.50px;top:349px;font-size:7.2px;color:#000;transform:scaleX(0.875);">70028</div>
<div class="t" style="left:461.00px;top:349px;font-size:7.2px;color:#000;">KT</div>
<div class="t" style="left:500.50px;top:349px;font-size:7.2px;color:#000;">J</div>
<div class="t" style="left:539.50px;top:349px;font-size:7.2px;color:#000;transform:scaleX(0.950);">3-61-1-13-2</div>
<svg style="left:20.2px;top:356.50px" width="5" height="5"><path d="M0 0H4.2L0 4.2Z" fill="#1e9a3c"/></svg>
<div class="t" style="left:22.40px;top:358px;font-size:7.2px;color:#000;transform:scaleX(0.875);">24900</div>
<div class="t" style="left:61.00px;top:358px;font-size:7.2px;color:#000;transform:scaleX(0.913);">Sinterbronzelager d1= 6"d2=10"b1=10</div>
<svg style="left:241.7px;top:356.50px" width="5" height="5"><path d="M0 0H4.2L0 4.2Z" fill="#1e9a3c"/></svg>
<div class="t" style="left:243.50px;top:358px;font-size:7.2px;color:#000;transform:scaleX(0.875);">10057</div>
<div class="t" style="left:354.40px;top:358px;font-size:7.2px;color:#000;transform:scaleX(0.875);">1</div>
<svg style="left:359.59999999999997px;top:356.50px" width="5" height="5"><path d="M0 0H4.2L0 4.2Z" fill="#1e9a3c"/></svg>
<div class="t" style="left:362.50px;top:358px;font-size:7.2px;color:#000;transform:scaleX(0.875);">0</div>
<svg style="left:410.0px;top:356.50px" width="5" height="5"><path d="M0 0H4.2L0 4.2Z" fill="#1e9a3c"/></svg>
<div class="t" style="left:412.50px;top:358px;font-size:7.2px;color:#000;transform:scaleX(0.875);">70028</div>
<div class="t" style="left:461.00px;top:358px;font-size:7.2px;color:#000;">KT</div>
<div class="t" style="left:500.50px;top:358px;font-size:7.2px;color:#000;">J</div>
<div class="t" style="left:539.50px;top:358px;font-size:7.2px;color:#000;transform:scaleX(0.950);">3-61-5-1</div>
<svg style="left:20.2px;top:365.10px" width="5" height="5"><path d="M0 0H4.2L0 4.2Z" fill="#1e9a3c"/></svg>
<div class="t" style="left:22.40px;top:366px;font-size:7.2px;color:#000;transform:scaleX(0.875);">24868</div>
<div class="t" style="left:61.00px;top:366px;font-size:7.2px;color:#000;transform:scaleX(0.913);">Sinterbronzelager d1= 6"d2=10"b1= 6</div>
<svg style="left:241.7px;top:365.10px" width="5" height="5"><path d="M0 0H4.2L0 4.2Z" fill="#1e9a3c"/></svg>
<div class="t" style="left:243.50px;top:366px;font-size:7.2px;color:#000;transform:scaleX(0.875);">10057</div>
<div class="t" style="left:354.40px;top:366px;font-size:7.2px;color:#000;transform:scaleX(0.875);">1</div>
<svg style="left:359.59999999999997px;top:365.10px" width="5" height="5"><path d="M0 0H4.2L0 4.2Z" fill="#1e9a3c"/></svg>
<div class="t" style="left:362.50px;top:366px;font-size:7.2px;color:#000;transform:scaleX(0.875);">0</div>
<svg style="left:410.0px;top:365.10px" width="5" height="5"><path d="M0 0H4.2L0 4.2Z" fill="#1e9a3c"/></svg>
<div class="t" style="left:412.50px;top:366px;font-size:7.2px;color:#000;transform:scaleX(0.875);">70028</div>
<div class="t" style="left:461.00px;top:366px;font-size:7.2px;color:#000;">KT</div>
<div class="t" style="left:500.50px;top:366px;font-size:7.2px;color:#000;">J</div>
<div class="t" style="left:539.50px;top:366px;font-size:7.2px;color:#000;transform:scaleX(0.950);">3-61-5-3</div>
<svg style="left:20.2px;top:373.70px" width="5" height="5"><path d="M0 0H4.2L0 4.2Z" fill="#1e9a3c"/></svg>
<div class="t" style="left:22.40px;top:375px;font-size:7.2px;color:#000;transform:scaleX(0.875);">15243</div>
<div class="t" style="left:61.00px;top:375px;font-size:7.2px;color:#000;transform:scaleX(0.913);">Sinterbronzelager d1= 2"d2=4"b1=6</div>
<svg style="left:241.7px;top:373.70px" width="5" height="5"><path d="M0 0H4.2L0 4.2Z" fill="#1e9a3c"/></svg>
<div class="t" style="left:243.50px;top:375px;font-size:7.2px;color:#000;transform:scaleX(0.875);">15245</div>
<div class="t" style="left:354.40px;top:375px;font-size:7.2px;color:#000;transform:scaleX(0.875);">1</div>
<svg style="left:359.59999999999997px;top:373.70px" width="5" height="5"><path d="M0 0H4.2L0 4.2Z" fill="#1e9a3c"/></svg>
<div class="t" style="left:362.50px;top:375px;font-size:7.2px;color:#000;transform:scaleX(0.875);">0</div>
<svg style="left:410.0px;top:373.70px" width="5" height="5"><path d="M0 0H4.2L0 4.2Z" fill="#1e9a3c"/></svg>
<div class="t" style="left:412.50px;top:375px;font-size:7.2px;color:#000;transform:scaleX(0.875);">70028</div>
<div class="t" style="left:461.00px;top:375px;font-size:7.2px;color:#000;">KT</div>
<div class="t" style="left:500.50px;top:375px;font-size:7.2px;color:#000;">J</div>
<svg style="left:537.2px;top:373.70px" width="5" height="5"><path d="M0 0H4.2L0 4.2Z" fill="#1e9a3c"/></svg>
<div class="t" style="left:539.50px;top:375px;font-size:7.2px;color:#000;transform:scaleX(0.950);">25-2-2</div>
<svg style="left:20.2px;top:382.30px" width="5" height="5"><path d="M0 0H4.2L0 4.2Z" fill="#1e9a3c"/></svg>
<div class="t" style="left:22.40px;top:383px;font-size:7.2px;color:#000;transform:scaleX(0.875);">24900</div>
<div class="t" style="left:61.00px;top:383px;font-size:7.2px;color:#000;transform:scaleX(0.913);">Sinterbronzelager d1= 6"d2=10"b1=10</div>
<svg style="left:241.7px;top:382.30px" width="5" height="5"><path d="M0 0H4.2L0 4.2Z" fill="#1e9a3c"/></svg>
<div class="t" style="left:243.50px;top:383px;font-size:7.2px;color:#000;transform:scaleX(0.875);">18339</div>
<div class="t" style="left:354.40px;top:383px;font-size:7.2px;color:#000;transform:scaleX(0.875);">1</div>
<svg style="left:359.59999999999997px;top:382.30px" width="5" height="5"><path d="M0 0H4.2L0 4.2Z" fill="#1e9a3c"/></svg>
<div class="t" style="left:362.50px;top:383px;font-size:7.2px;color:#000;transform:scaleX(0.875);">0</div>
<svg style="left:410.0px;top:382.30px" width="5" height="5"><path d="M0 0H4.2L0 4.2Z" fill="#1e9a3c"/></svg>
<div class="t" style="left:412.50px;top:383px;font-size:7.2px;color:#000;transform:scaleX(0.875);">70028</div>
<div class="t" style="left:461.00px;top:383px;font-size:7.2px;color:#000;">KT</div>
<div class="t" style="left:500.50px;top:383px;font-size:7.2px;color:#000;">J</div>
<svg style="left:537.2px;top:382.30px" width="5" height="5"><path d="M0 0H4.2L0 4.2Z" fill="#1e9a3c"/></svg>
<div class="t" style="left:539.50px;top:383px;font-size:7.2px;color:#000;transform:scaleX(0.950);">28-3-4</div>
<svg style="left:20.2px;top:390.90px" width="5" height="5"><path d="M0 0H4.2L0 4.2Z" fill="#1e9a3c"/></svg>
<div class="t" style="left:22.40px;top:392px;font-size:7.2px;color:#000;transform:scaleX(0.875);">16345</div>
<div class="t" style="left:61.00px;top:392px;font-size:7.2px;color:#000;transform:scaleX(0.913);">Sinterbronzelager d1= 4"d2=7"b1=6</div>
<svg style="left:241.7px;top:390.90px" width="5" height="5"><path d="M0 0H4.2L0 4.2Z" fill="#1e9a3c"/></svg>
<div class="t" style="left:243.50px;top:392px;font-size:7.2px;color:#000;transform:scaleX(0.875);">43074</div>
<div class="t" style="left:354.40px;top:392px;font-size:7.2px;color:#000;transform:scaleX(0.875);">2</div>
<svg style="left:359.59999999999997px;top:390.90px" width="5" height="5"><path d="M0 0H4.2L0 4.2Z" fill="#1e9a3c"/></svg>
<div class="t" style="left:362.50px;top:392px;font-size:7.2px;color:#000;transform:scaleX(0.875);">0</div>
<svg style="left:410.0px;top:390.90px" width="5" height="5"><path d="M0 0H4.2L0 4.2Z" fill="#1e9a3c"/></svg>
<div class="t" style="left:412.50px;top:392px;font-size:7.2px;color:#000;transform:scaleX(0.875);">70028</div>
<div class="t" style="left:461.00px;top:392px;font-size:7.2px;color:#000;">KT</div>
<div class="t" style="left:500.50px;top:392px;font-size:7.2px;color:#000;">J</div>
<div class="t" style="left:539.50px;top:392px;font-size:7.2px;color:#000;transform:scaleX(0.950);">31-3</div>
<svg style="left:20.2px;top:399.50px" width="5" height="5"><path d="M0 0H4.2L0 4.2Z" fill="#1e9a3c"/></svg>
<div class="t" style="left:22.40px;top:400px;font-size:7.2px;color:#000;transform:scaleX(0.875);">11655</div>
<div class="t" style="left:61.00px;top:400px;font-size:7.2px;color:#000;transform:scaleX(0.961);">Lagernadel NRB Ý 4x34,8 G2</div>
<svg style="left:241.7px;top:399.50px" width="5" height="5"><path d="M0 0H4.2L0 4.2Z" fill="#1e9a3c"/></svg>
<div class="t" style="left:243.50px;top:400px;font-size:7.2px;color:#000;transform:scaleX(0.875);">43973</div>
<div class="t" style="left:354.40px;top:400px;font-size:7.2px;color:#000;transform:scaleX(0.875);">1</div>
<svg style="left:359.59999999999997px;top:399.50px" width="5" height="5"><path d="M0 0H4.2L0 4.2Z" fill="#1e9a3c"/></svg>
<div class="t" style="left:362.50px;top:400px;font-size:7.2px;color:#000;transform:scaleX(0.875);">0</div>
<svg style="left:410.0px;top:399.50px" width="5" height="5"><path d="M0 0H4.2L0 4.2Z" fill="#1e9a3c"/></svg>
<div class="t" style="left:412.50px;top:400px;font-size:7.2px;color:#000;transform:scaleX(0.875);">70035</div>
<div class="t" style="left:461.00px;top:400px;font-size:7.2px;color:#000;">KT</div>
<div class="t" style="left:500.50px;top:400px;font-size:7.2px;color:#000;">N</div>
<div class="t" style="left:539.50px;top:400px;font-size:7.2px;color:#000;transform:scaleX(0.950);">3-44-7-2-4</div>
<svg style="left:20.2px;top:408.10px" width="5" height="5"><path d="M0 0H4.2L0 4.2Z" fill="#1e9a3c"/></svg>
<div class="t" style="left:22.40px;top:409px;font-size:7.2px;color:#000;transform:scaleX(0.875);">11655</div>
<div class="t" style="left:61.00px;top:409px;font-size:7.2px;color:#000;transform:scaleX(0.961);">Lagernadel NRB Ý 4x34,8 G2</div>
<svg style="left:241.7px;top:408.10px" width="5" height="5"><path d="M0 0H4.2L0 4.2Z" fill="#1e9a3c"/></svg>
<div class="t" style="left:243.50px;top:409px;font-size:7.2px;color:#000;transform:scaleX(0.875);">47901</div>
<div class="t" style="left:354.40px;top:409px;font-size:7.2px;color:#000;transform:scaleX(0.875);">1</div>
<svg style="left:359.59999999999997px;top:408.10px" width="5" height="5"><path d="M0 0H4.2L0 4.2Z" fill="#1e9a3c"/></svg>
<div class="t" style="left:362.50px;top:409px;font-size:7.2px;color:#000;transform:scaleX(0.875);">0</div>
<svg style="left:410.0px;top:408.10px" width="5" height="5"><path d="M0 0H4.2L0 4.2Z" fill="#1e9a3c"/></svg>
<div class="t" style="left:412.50px;top:409px;font-size:7.2px;color:#000;transform:scaleX(0.875);">70035</div>
<div class="t" style="left:461.00px;top:409px;font-size:7.2px;color:#000;">KT</div>
<div class="t" style="left:500.50px;top:409px;font-size:7.2px;color:#000;">N</div>
<div class="t" style="left:539.50px;top:409px;font-size:7.2px;color:#000;transform:scaleX(0.950);">3-44-8</div>
<svg style="left:20.2px;top:416.70px" width="5" height="5"><path d="M0 0H4.2L0 4.2Z" fill="#1e9a3c"/></svg>
<div class="t" style="left:22.40px;top:418px;font-size:7.2px;color:#000;transform:scaleX(0.875);">12046</div>
<div class="t" style="left:61.00px;top:418px;font-size:7.2px;color:#000;transform:scaleX(0.896);">Widerstand 1K2 1%</div>
<svg style="left:241.7px;top:416.70px" width="5" height="5"><path d="M0 0H4.2L0 4.2Z" fill="#1e9a3c"/></svg>
<div class="t" style="left:243.50px;top:418px;font-size:7.2px;color:#000;transform:scaleX(0.875);">28815</div>
<div class="t" style="left:354.40px;top:418px;font-size:7.2px;color:#000;transform:scaleX(0.875);">1</div>
<svg style="left:359.59999999999997px;top:416.70px" width="5" height="5"><path d="M0 0H4.2L0 4.2Z" fill="#1e9a3c"/></svg>
<div class="t" style="left:362.50px;top:418px;font-size:7.2px;color:#000;transform:scaleX(0.875);">0</div>
<svg style="left:410.0px;top:416.70px" width="5" height="5"><path d="M0 0H4.2L0 4.2Z" fill="#1e9a3c"/></svg>
<div class="t" style="left:412.50px;top:418px;font-size:7.2px;color:#000;transform:scaleX(0.875);">70037</div>
<div class="t" style="left:461.00px;top:418px;font-size:7.2px;color:#000;">KT</div>
<div class="t" style="left:500.50px;top:418px;font-size:7.2px;color:#000;">N</div>
<div class="t" style="left:539.50px;top:418px;font-size:7.2px;color:#000;transform:scaleX(0.950);">3-47-1-24</div>
<svg style="left:20.2px;top:425.30px" width="5" height="5"><path d="M0 0H4.2L0 4.2Z" fill="#1e9a3c"/></svg>
<div class="t" style="left:22.40px;top:426px;font-size:7.2px;color:#000;transform:scaleX(0.875);">12046</div>
<div class="t" style="left:61.00px;top:426px;font-size:7.2px;color:#000;transform:scaleX(0.896);">Widerstand 1K2 1%</div>
<svg style="left:241.7px;top:425.30px" width="5" height="5"><path d="M0 0H4.2L0 4.2Z" fill="#1e9a3c"/></svg>
<div class="t" style="left:243.50px;top:426px;font-size:7.2px;color:#000;transform:scaleX(0.875);">28815</div>
<div class="t" style="left:354.40px;top:426px;font-size:7.2px;color:#000;transform:scaleX(0.875);">1</div>
<svg style="left:359.59999999999997px;top:425.30px" width="5" height="5"><path d="M0 0H4.2L0 4.2Z" fill="#1e9a3c"/></svg>
<div class="t" style="left:362.50px;top:426px;font-size:7.2px;color:#000;transform:scaleX(0.875);">0</div>
<svg style="left:410.0px;top:425.30px" width="5" height="5"><path d="M0 0H4.2L0 4.2Z" fill="#1e9a3c"/></svg>
<div class="t" style="left:412.50px;top:426px;font-size:7.2px;color:#000;transform:scaleX(0.875);">70037</div>
<div class="t" style="left:461.00px;top:426px;font-size:7.2px;color:#000;">KT</div>
<div class="t" style="left:500.50px;top:426px;font-size:7.2px;color:#000;">N</div>
<div class="t" style="left:539.50px;top:426px;font-size:7.2px;color:#000;transform:scaleX(0.950);">3-47-1-29</div>
<svg style="left:20.2px;top:433.90px" width="5" height="5"><path d="M0 0H4.2L0 4.2Z" fill="#1e9a3c"/></svg>
<div class="t" style="left:22.40px;top:435px;font-size:7.2px;color:#000;transform:scaleX(0.875);">12046</div>
<div class="t" style="left:61.00px;top:435px;font-size:7.2px;color:#000;transform:scaleX(0.896);">Widerstand 1K2 1%</div>
<svg style="left:241.7px;top:433.90px" width="5" height="5"><path d="M0 0H4.2L0 4.2Z" fill="#1e9a3c"/></svg>
<div class="t" style="left:243.50px;top:435px;font-size:7.2px;color:#000;transform:scaleX(0.875);">28815</div>
<div class="t" style="left:354.40px;top:435px;font-size:7.2px;color:#000;transform:scaleX(0.875);">1</div>
<svg style="left:359.59999999999997px;top:433.90px" width="5" height="5"><path d="M0 0H4.2L0 4.2Z" fill="#1e9a3c"/></svg>
<div class="t" style="left:362.50px;top:435px;font-size:7.2px;color:#000;transform:scaleX(0.875);">0</div>
<svg style="left:410.0px;top:433.90px" width="5" height="5"><path d="M0 0H4.2L0 4.2Z" fill="#1e9a3c"/></svg>
<div class="t" style="left:412.50px;top:435px;font-size:7.2px;color:#000;transform:scaleX(0.875);">70037</div>
<div class="t" style="left:461.00px;top:435px;font-size:7.2px;color:#000;">KT</div>
<div class="t" style="left:500.50px;top:435px;font-size:7.2px;color:#000;">N</div>
<div class="t" style="left:539.50px;top:435px;font-size:7.2px;color:#000;transform:scaleX(0.950);">3-47-1-31</div>
<svg style="left:20.2px;top:442.50px" width="5" height="5"><path d="M0 0H4.2L0 4.2Z" fill="#1e9a3c"/></svg>
<div class="t" style="left:22.40px;top:444px;font-size:7.2px;color:#000;transform:scaleX(0.875);">12046</div>
<div class="t" style="left:61.00px;top:444px;font-size:7.2px;color:#000;transform:scaleX(0.896);">Widerstand 1K2 1%</div>
<svg style="left:241.7px;top:442.50px" width="5" height="5"><path d="M0 0H4.2L0 4.2Z" fill="#1e9a3c"/></svg>
<div class="t" style="left:243.50px;top:444px;font-size:7.2px;color:#000;transform:scaleX(0.875);">28815</div>
<div class="t" style="left:354.40px;top:444px;font-size:7.2px;color:#000;transform:scaleX(0.875);">1</div>
<svg style="left:359.59999999999997px;top:442.50px" width="5" height="5"><path d="M0 0H4.2L0 4.2Z" fill="#1e9a3c"/></svg>
<div class="t" style="left:362.50px;top:444px;font-size:7.2px;color:#000;transform:scaleX(0.875);">0</div>
<svg style="left:410.0px;top:442.50px" width="5" height="5"><path d="M0 0H4.2L0 4.2Z" fill="#1e9a3c"/></svg>
<div class="t" style="left:412.50px;top:444px;font-size:7.2px;color:#000;transform:scaleX(0.875);">70037</div>
<div class="t" style="left:461.00px;top:444px;font-size:7.2px;color:#000;">KT</div>
<div class="t" style="left:500.50px;top:444px;font-size:7.2px;color:#000;">N</div>
<div class="t" style="left:539.50px;top:444px;font-size:7.2px;color:#000;transform:scaleX(0.950);">3-47-1-33</div>
<svg style="left:20.2px;top:451.10px" width="5" height="5"><path d="M0 0H4.2L0 4.2Z" fill="#1e9a3c"/></svg>
<div class="t" style="left:22.40px;top:452px;font-size:7.2px;color:#000;transform:scaleX(0.875);">12165</div>
<div class="t" style="left:61.00px;top:452px;font-size:7.2px;color:#000;transform:scaleX(0.959);">Widerstand 0,015/4V</div>
<svg style="left:241.7px;top:451.10px" width="5" height="5"><path d="M0 0H4.2L0 4.2Z" fill="#1e9a3c"/></svg>
<div class="t" style="left:243.50px;top:452px;font-size:7.2px;color:#000;transform:scaleX(0.875);">35209</div>
<div class="t" style="left:354.40px;top:452px;font-size:7.2px;color:#000;transform:scaleX(0.875);">1</div>
<svg style="left:359.59999999999997px;top:451.10px" width="5" height="5"><path d="M0 0H4.2L0 4.2Z" fill="#1e9a3c"/></svg>
<div class="t" style="left:362.50px;top:452px;font-size:7.2px;color:#000;transform:scaleX(0.875);">0</div>
<svg style="left:410.0px;top:451.10px" width="5" height="5"><path d="M0 0H4.2L0 4.2Z" fill="#1e9a3c"/></svg>
<div class="t" style="left:412.50px;top:452px;font-size:7.2px;color:#000;transform:scaleX(0.875);">70037</div>
<div class="t" style="left:461.00px;top:452px;font-size:7.2px;color:#000;">KT</div>
<div class="t" style="left:500.50px;top:452px;font-size:7.2px;color:#000;">N</div>
<div class="t" style="left:539.50px;top:452px;font-size:7.2px;color:#000;transform:scaleX(0.950);">4-29-48-86</div>
<svg style="left:20.2px;top:459.70px" width="5" height="5"><path d="M0 0H4.2L0 4.2Z" fill="#1e9a3c"/></svg>
<div class="t" style="left:22.40px;top:461px;font-size:7.2px;color:#000;transform:scaleX(0.875);">10731</div>
<div class="t" style="left:61.00px;top:461px;font-size:7.2px;color:#000;transform:scaleX(0.963);">Widerstand 22</div>
<svg style="left:241.7px;top:459.70px" width="5" height="5"><path d="M0 0H4.2L0 4.2Z" fill="#1e9a3c"/></svg>
<div class="t" style="left:243.50px;top:461px;font-size:7.2px;color:#000;transform:scaleX(0.875);">35209</div>
<div class="t" style="left:354.40px;top:461px;font-size:7.2px;color:#000;transform:scaleX(0.875);">1</div>
<svg style="left:359.59999999999997px;top:459.70px" width="5" height="5"><path d="M0 0H4.2L0 4.2Z" fill="#1e9a3c"/></svg>
<div class="t" style="left:362.50px;top:461px;font-size:7.2px;color:#000;transform:scaleX(0.875);">0</div>
<svg style="left:410.0px;top:459.70px" width="5" height="5"><path d="M0 0H4.2L0 4.2Z" fill="#1e9a3c"/></svg>
<div class="t" style="left:412.50px;top:461px;font-size:7.2px;color:#000;transform:scaleX(0.875);">70037</div>
<div class="t" style="left:461.00px;top:461px;font-size:7.2px;color:#000;">KT</div>
<div class="t" style="left:500.50px;top:461px;font-size:7.2px;color:#000;">N</div>
<div class="t" style="left:539.50px;top:461px;font-size:7.2px;color:#000;transform:scaleX(0.950);">4-29-48-102</div>
<svg style="left:20.2px;top:468.30px" width="5" height="5"><path d="M0 0H4.2L0 4.2Z" fill="#1e9a3c"/></svg>
<div class="t" style="left:22.40px;top:469px;font-size:7.2px;color:#000;transform:scaleX(0.875);">10734</div>
<div class="t" style="left:61.00px;top:469px;font-size:7.2px;color:#000;transform:scaleX(0.967);">Widerstand 390</div>
<svg style="left:241.7px;top:468.30px" width="5" height="5"><path d="M0 0H4.2L0 4.2Z" fill="#1e9a3c"/></svg>
<div class="t" style="left:243.50px;top:469px;font-size:7.2px;color:#000;transform:scaleX(0.875);">35209</div>
<div class="t" style="left:354.40px;top:469px;font-size:7.2px;color:#000;transform:scaleX(0.875);">1</div>
<svg style="left:359.59999999999997px;top:468.30px" width="5" height="5"><path d="M0 0H4.2L0 4.2Z" fill="#1e9a3c"/></svg>
<div class="t" style="left:362.50px;top:469px;font-size:7.2px;color:#000;transform:scaleX(0.875);">0</div>
<svg style="left:410.0px;top:468.30px" width="5" height="5"><path d="M0 0H4.2L0 4.2Z" fill="#1e9a3c"/></svg>
<div class="t" style="left:412.50px;top:469px;font-size:7.2px;color:#000;transform:scaleX(0.875);">70037</div>
<div class="t" style="left:461.00px;top:469px;font-size:7.2px;color:#000;">KT</div>
<div class="t" style="left:500.50px;top:469px;font-size:7.2px;color:#000;">N</div>
<div class="t" style="left:539.50px;top:469px;font-size:7.2px;color:#000;transform:scaleX(0.950);">4-29-48-127</div>
<svg style="left:20.2px;top:476.90px" width="5" height="5"><path d="M0 0H4.2L0 4.2Z" fill="#1e9a3c"/></svg>
<div class="t" style="left:22.40px;top:478px;font-size:7.2px;color:#000;transform:scaleX(0.875);">12046</div>
<div class="t" style="left:61.00px;top:478px;font-size:7.2px;color:#000;transform:scaleX(0.896);">Widerstand 1K2 1%</div>
<svg style="left:241.7px;top:476.90px" width="5" height="5"><path d="M0 0H4.2L0 4.2Z" fill="#1e9a3c"/></svg>
<div class="t" style="left:243.50px;top:478px;font-size:7.2px;color:#000;transform:scaleX(0.875);">28815</div>
<div class="t" style="left:354.40px;top:478px;font-size:7.2px;color:#000;transform:scaleX(0.875);">1</div>
<svg style="left:359.59999999999997px;top:476.90px" width="5" height="5"><path d="M0 0H4.2L0 4.2Z" fill="#1e9a3c"/></svg>
<div class="t" style="left:362.50px;top:478px;font-size:7.2px;color:#000;transform:scaleX(0.875);">0</div>
<svg style="left:410.0px;top:476.90px" width="5" height="5"><path d="M0 0H4.2L0 4.2Z" fill="#1e9a3c"/></svg>
<div class="t" style="left:412.50px;top:478px;font-size:7.2px;color:#000;transform:scaleX(0.875);">70037</div>
<div class="t" style="left:461.00px;top:478px;font-size:7.2px;color:#000;">KT</div>
<div class="t" style="left:500.50px;top:478px;font-size:7.2px;color:#000;">N</div>
<svg style="left:537.2px;top:476.90px" width="5" height="5"><path d="M0 0H4.2L0 4.2Z" fill="#1e9a3c"/></svg>
<div class="t" style="left:539.50px;top:478px;font-size:7.2px;color:#000;transform:scaleX(0.950);">15-1-24</div>
<svg style="left:20.2px;top:485.50px" width="5" height="5"><path d="M0 0H4.2L0 4.2Z" fill="#1e9a3c"/></svg>
<div class="t" style="left:22.40px;top:487px;font-size:7.2px;color:#000;transform:scaleX(0.875);">12046</div>
<div class="t" style="left:61.00px;top:487px;font-size:7.2px;color:#000;transform:scaleX(0.896);">Widerstand 1K2 1%</div>
<svg style="left:241.7px;top:485.50px" width="5" height="5"><path d="M0 0H4.2L0 4.2Z" fill="#1e9a3c"/></svg>
<div class="t" style="left:243.50px;top:487px;font-size:7.2px;color:#000;transform:scaleX(0.875);">28815</div>
<div class="t" style="left:354.40px;top:487px;font-size:7.2px;color:#000;transform:scaleX(0.875);">1</div>
<svg style="left:359.59999999999997px;top:485.50px" width="5" height="5"><path d="M0 0H4.2L0 4.2Z" fill="#1e9a3c"/></svg>
<div class="t" style="left:362.50px;top:487px;font-size:7.2px;color:#000;transform:scaleX(0.875);">0</div>
<svg style="left:410.0px;top:485.50px" width="5" height="5"><path d="M0 0H4.2L0 4.2Z" fill="#1e9a3c"/></svg>
<div class="t" style="left:412.50px;top:487px;font-size:7.2px;color:#000;transform:scaleX(0.875);">70037</div>
<div class="t" style="left:461.00px;top:487px;font-size:7.2px;color:#000;">KT</div>
<div class="t" style="left:500.50px;top:487px;font-size:7.2px;color:#000;">N</div>
<svg style="left:537.2px;top:485.50px" width="5" height="5"><path d="M0 0H4.2L0 4.2Z" fill="#1e9a3c"/></svg>
<div class="t" style="left:539.50px;top:487px;font-size:7.2px;color:#000;transform:scaleX(0.950);">15-1-29</div>
<svg style="left:20.2px;top:494.10px" width="5" height="5"><path d="M0 0H4.2L0 4.2Z" fill="#1e9a3c"/></svg>
<div class="t" style="left:22.40px;top:495px;font-size:7.2px;color:#000;transform:scaleX(0.875);">12046</div>
<div class="t" style="left:61.00px;top:495px;font-size:7.2px;color:#000;transform:scaleX(0.896);">Widerstand 1K2 1%</div>
<svg style="left:241.7px;top:494.10px" width="5" height="5"><path d="M0 0H4.2L0 4.2Z" fill="#1e9a3c"/></svg>
<div class="t" style="left:243.50px;top:495px;font-size:7.2px;color:#000;transform:scaleX(0.875);">28815</div>
<div class="t" style="left:354.40px;top:495px;font-size:7.2px;color:#000;transform:scaleX(0.875);">1</div>
<svg style="left:359.59999999999997px;top:494.10px" width="5" height="5"><path d="M0 0H4.2L0 4.2Z" fill="#1e9a3c"/></svg>
<div class="t" style="left:362.50px;top:495px;font-size:7.2px;color:#000;transform:scaleX(0.875);">0</div>
<svg style="left:410.0px;top:494.10px" width="5" height="5"><path d="M0 0H4.2L0 4.2Z" fill="#1e9a3c"/></svg>
<div class="t" style="left:412.50px;top:495px;font-size:7.2px;color:#000;transform:scaleX(0.875);">70037</div>
<div class="t" style="left:461.00px;top:495px;font-size:7.2px;color:#000;">KT</div>
<div class="t" style="left:500.50px;top:495px;font-size:7.2px;color:#000;">N</div>
<svg style="left:537.2px;top:494.10px" width="5" height="5"><path d="M0 0H4.2L0 4.2Z" fill="#1e9a3c"/></svg>
<div class="t" style="left:539.50px;top:495px;font-size:7.2px;color:#000;transform:scaleX(0.950);">15-1-31</div>
<svg style="left:20.2px;top:502.70px" width="5" height="5"><path d="M0 0H4.2L0 4.2Z" fill="#1e9a3c"/></svg>
<div class="t" style="left:22.40px;top:504px;font-size:7.2px;color:#000;transform:scaleX(0.875);">12046</div>
<div class="t" style="left:61.00px;top:504px;font-size:7.2px;color:#000;transform:scaleX(0.896);">Widerstand 1K2 1%</div>
<svg style="left:241.7px;top:502.70px" width="5" height="5"><path d="M0 0H4.2L0 4.2Z" fill="#1e9a3c"/></svg>
<div class="t" style="left:243.50px;top:504px;font-size:7.2px;color:#000;transform:scaleX(0.875);">28815</div>
<div class="t" style="left:354.40px;top:504px;font-size:7.2px;color:#000;transform:scaleX(0.875);">1</div>
<svg style="left:359.59999999999997px;top:502.70px" width="5" height="5"><path d="M0 0H4.2L0 4.2Z" fill="#1e9a3c"/></svg>
<div class="t" style="left:362.50px;top:504px;font-size:7.2px;color:#000;transform:scaleX(0.875);">0</div>
<svg style="left:410.0px;top:502.70px" width="5" height="5"><path d="M0 0H4.2L0 4.2Z" fill="#1e9a3c"/></svg>
<div class="t" style="left:412.50px;top:504px;font-size:7.2px;color:#000;transform:scaleX(0.875);">70037</div>
<div class="t" style="left:461.00px;top:504px;font-size:7.2px;color:#000;">KT</div>
<div class="t" style="left:500.50px;top:504px;font-size:7.2px;color:#000;">N</div>
<svg style="left:537.2px;top:502.70px" width="5" height="5"><path d="M0 0H4.2L0 4.2Z" fill="#1e9a3c"/></svg>
<div class="t" style="left:539.50px;top:504px;font-size:7.2px;color:#000;transform:scaleX(0.950);">15-1-33</div>
<svg style="left:20.2px;top:511.30px" width="5" height="5"><path d="M0 0H4.2L0 4.2Z" fill="#1e9a3c"/></svg>
<div class="t" style="left:22.40px;top:512px;font-size:7.2px;color:#000;transform:scaleX(0.875);">12162</div>
<div class="t" style="left:61.00px;top:512px;font-size:7.2px;color:#000;transform:scaleX(0.984);">Einziehmutter SSKKO M6-0733</div>
<svg style="left:241.7px;top:511.30px" width="5" height="5"><path d="M0 0H4.2L0 4.2Z" fill="#1e9a3c"/></svg>
<div class="t" style="left:243.50px;top:512px;font-size:7.2px;color:#000;transform:scaleX(0.875);">53595</div>
<div class="t" style="left:354.40px;top:512px;font-size:7.2px;color:#000;transform:scaleX(0.875);">3</div>
<svg style="left:359.59999999999997px;top:511.30px" width="5" height="5"><path d="M0 0H4.2L0 4.2Z" fill="#1e9a3c"/></svg>
<div class="t" style="left:362.50px;top:512px;font-size:7.2px;color:#000;transform:scaleX(0.875);">0</div>
<svg style="left:410.0px;top:511.30px" width="5" height="5"><path d="M0 0H4.2L0 4.2Z" fill="#1e9a3c"/></svg>
<div class="t" style="left:412.50px;top:512px;font-size:7.2px;color:#000;transform:scaleX(0.875);">70071</div>
<div class="t" style="left:461.00px;top:512px;font-size:7.2px;color:#000;">KT</div>
<div class="t" style="left:500.50px;top:512px;font-size:7.2px;color:#000;">J</div>
<svg style="left:537.2px;top:511.30px" width="5" height="5"><path d="M0 0H4.2L0 4.2Z" fill="#1e9a3c"/></svg>
<div class="t" style="left:539.50px;top:512px;font-size:7.2px;color:#000;transform:scaleX(0.950);">4-1-3</div>
<svg style="left:20.2px;top:519.90px" width="5" height="5"><path d="M0 0H4.2L0 4.2Z" fill="#1e9a3c"/></svg>
<div class="t" style="left:22.40px;top:521px;font-size:7.2px;color:#000;transform:scaleX(0.875);">12162</div>
<div class="t" style="left:61.00px;top:521px;font-size:7.2px;color:#000;transform:scaleX(0.984);">Einziehmutter SSKKO M6-0733</div>
<svg style="left:241.7px;top:519.90px" width="5" height="5"><path d="M0 0H4.2L0 4.2Z" fill="#1e9a3c"/></svg>
<div class="t" style="left:243.50px;top:521px;font-size:7.2px;color:#000;transform:scaleX(0.875);">27950</div>
<div class="t" style="left:354.40px;top:521px;font-size:7.2px;color:#000;transform:scaleX(0.875);">2</div>
<svg style="left:359.59999999999997px;top:519.90px" width="5" height="5"><path d="M0 0H4.2L0 4.2Z" fill="#1e9a3c"/></svg>
<div class="t" style="left:362.50px;top:521px;font-size:7.2px;color:#000;transform:scaleX(0.875);">0</div>
<svg style="left:410.0px;top:519.90px" width="5" height="5"><path d="M0 0H4.2L0 4.2Z" fill="#1e9a3c"/></svg>
<div class="t" style="left:412.50px;top:521px;font-size:7.2px;color:#000;transform:scaleX(0.875);">70071</div>
<div class="t" style="left:461.00px;top:521px;font-size:7.2px;color:#000;">KT</div>
<div class="t" style="left:500.50px;top:521px;font-size:7.2px;color:#000;">J</div>
<svg style="left:537.2px;top:519.90px" width="5" height="5"><path d="M0 0H4.2L0 4.2Z" fill="#1e9a3c"/></svg>
<div class="t" style="left:539.50px;top:521px;font-size:7.2px;color:#000;transform:scaleX(0.950);">4-2-1</div>
<div class="a" style="left:781.4px;top:193px;width:17.5px;height:336px;background:#dadada;"></div>
<div class="a" style="left:780.9px;top:201.4px;width:1px;height:326.80000000000007px;background:#a8a8a8;"></div>
<div class="a" style="left:784.4px;top:195.3px;width:11.2px;height:10.5px;background:#fff;border:0.8px solid #c6c6c6"></div>
<svg style="left:787px;top:198.8px" width="7" height="4"><path d="M0 3.2L3 0L6 3.2Z" fill="#666"/></svg>
<div class="a" style="left:784.4px;top:205.8px;width:11.2px;height:13.7px;background:#fff;border:0.8px solid #c6c6c6"></div>
<div class="a" style="left:784.4px;top:518.4px;width:11.2px;height:10.6px;background:#fff;border:0.8px solid #c6c6c6"></div>
<svg style="left:787px;top:521.8px" width="7" height="4"><path d="M0 0L3 3.2L6 0Z" fill="#666"/></svg>
<div class="a" style="left:1px;top:529px;width:798px;height:22.5px;background:#e6e6e6;"></div>
<div class="a" style="left:1px;top:528.2px;width:798px;height:0.8px;background:#c6c6c6;"></div>
<svg style="left:22.5px;top:537.5px" width="5" height="8"><path d="M3.2 0.5V6.5L0.3 3.5Z" fill="#c4c4c4"/></svg>
<svg style="left:44.5px;top:537.5px" width="5" height="8"><path d="M0.5 0.5V6.5L3.4 3.5Z" fill="#c4c4c4"/></svg>
<div class="a" style="left:80.3px;top:529.3px;width:58.5px;height:19.7px;background:#fff;border-left:0.8px solid #d0d0d0;border-right:0.8px solid #d0d0d0"></div>
<div class="a" style="left:80.3px;top:547.5px;width:58.5px;height:1.6px;background:#217346;"></div>
<div class="t" style="left:89.00px;top:534px;font-size:11.65px;color:#217346;font-weight:bold;transform:scaleX(0.885);">Tabelle1</div>
<svg style="left:163px;top:532px" width="16" height="16"><circle cx="8" cy="8" r="5.8" fill="none" stroke="#8a8a8a" stroke-width="1"/><path d="M8 4.8V11.2M4.8 8H11.2" stroke="#8a8a8a" stroke-width="1.2"/></svg>
<svg style="left:478px;top:536px" width="4" height="10"><circle cx="2" cy="1.5" r="0.6" fill="#999"/><circle cx="2" cy="4.5" r="0.6" fill="#999"/><circle cx="2" cy="7.5" r="0.6" fill="#999"/></svg>
<div class="a" style="left:493.5px;top:535px;width:287px;height:11.6px;background:#d9d9d9;"></div>
<div class="a" style="left:493.5px;top:535px;width:12px;height:11.5px;background:#fff;border:0.6px solid #cfcfcf"></div>
<svg style="left:497px;top:538px" width="4" height="6"><path d="M3.5 0V6L0 3Z" fill="#555"/></svg>
<div class="a" style="left:505px;top:535px;width:190.5px;height:11.5px;background:#fff;border:0.6px solid #cfcfcf"></div>
<div class="a" style="left:768px;top:535px;width:12px;height:11.5px;background:#fff;border:0.6px solid #cfcfcf"></div>
<svg style="left:772px;top:538px" width="4" height="6"><path d="M0 0V6L3.5 3Z" fill="#555"/></svg>
<div class="a" style="left:1px;top:551px;width:798px;height:17.5px;background:#f1f1f1;"></div>
<div class="a" style="left:1px;top:550.8px;width:798px;height:0.9px;background:#d6d6d6;"></div>
<div class="t" style="left:7.50px;top:554px;font-size:10.15px;color:#444;transform:scaleX(0.887);-webkit-text-stroke:0.15px currentColor;">Bereit</div>
<div class="a" style="left:565px;top:551px;width:28.7px;height:17px;background:#d2d2d2;"></div>
<svg style="left:572.5px;top:553.8px" width="12" height="11"><path d="M1 0.6H10.4Q11 0.6 11 1.2V9.8Q11 10.4 10.4 10.4H1.2Q0.6 10.4 0.6 9.8V1.2Q0.6 0.6 1.2 0.6Z" fill="none" stroke="#8a8a8a" stroke-width="1"/><path d="M0.6 3.9H11M0.6 7.1H11M4.1 0.6V10.4M7.5 0.6V10.4" stroke="#8a8a8a" stroke-width="1"/></svg>
<svg style="left:602.5px;top:553.8px" width="12" height="11"><rect x="0.6" y="0.6" width="10.6" height="9.6" fill="none" stroke="#8a8a8a" stroke-width="1"/><rect x="3" y="2.8" width="5.8" height="5.4" fill="none" stroke="#8a8a8a" stroke-width="0.9"/><path d="M4.6 5.5H7.2" stroke="#8a8a8a" stroke-width="0.9"/></svg>
<svg style="left:632.5px;top:553.8px" width="12" height="11"><rect x="0.6" y="0.6" width="10.6" height="9.6" fill="none" stroke="#8a8a8a" stroke-width="1"/><path d="M0.6 7.3H7.4V0.6M4.4 0.6V7.3" fill="none" stroke="#8a8a8a" stroke-width="0.9"/></svg>
<div class="a" style="left:657px;top:558.6px;width:5.5px;height:1.3px;background:#666;"></div>
<div class="a" style="left:665px;top:558.7px;width:78px;height:0.8px;background:#999;"></div>
<div class="a" style="left:684px;top:554.5px;width:3px;height:8.5px;background:#555;"></div>
<div class="a" style="left:704px;top:556.5px;width:0.8px;height:4.5px;background:#999;"></div>
<div class="a" style="left:746.5px;top:558.5px;width:6.5px;height:1.3px;background:#666;"></div>
<div class="a" style="left:749.1px;top:555.9px;width:1.3px;height:6.5px;background:#666;"></div>
<div class="t" style="left:764.00px;top:555px;font-size:8.7px;color:#444;transform:scaleX(0.933);-webkit-text-stroke:0.15px currentColor;">55 %</div>
<svg style="left:18px;top:10px" width="13" height="12" viewBox="0 0 13 12"><path d="M0.9 0.4H11.8V11.2H0.9Z" fill="#fff"/><path d="M2.4 1.4H10.3V4.6Q10.3 5.6 9.3 5.6H3.4Q2.4 5.6 2.4 4.6Z" fill="#1f6b3f"/><path d="M3.1 7.3H9.8V10.3H6.2V9H5V10.3H3.1Z" fill="#1f6b3f"/><rect x="0.9" y="0.4" width="10.9" height="1" fill="#217346" opacity="0.45"/></svg>
<svg style="left:40px;top:9px" width="14" height="13" viewBox="0 0 14 13"><path d="M1.5 4.4H8A3.4 3.4 0 0 1 8 11.2H8.6" fill="none" stroke="#fff" stroke-opacity="0.38" stroke-width="1.5"/><path d="M4.4 1.5L1.5 4.4L4.4 7.3" fill="none" stroke="#fff" stroke-opacity="0.38" stroke-width="1.5"/></svg>
<svg style="left:57.30px;top:14.35px" width="4.6" height="2.9"><path d="M0 0H3.6L1.8 1.9Z" fill="rgba(255,255,255,0.38)"/></svg>
<svg style="left:67.5px;top:9px" width="14" height="13" viewBox="0 0 14 13"><path d="M12 4.4H5.5A3.4 3.4 0 0 0 5.5 11.2H4.9" fill="none" stroke="#fff" stroke-opacity="0.38" stroke-width="1.5"/><path d="M9.1 1.5L12 4.4L9.1 7.3" fill="none" stroke="#fff" stroke-opacity="0.38" stroke-width="1.5"/></svg>
<svg style="left:84.60px;top:14.35px" width="4.6" height="2.9"><path d="M0 0H3.6L1.8 1.9Z" fill="rgba(255,255,255,0.38)"/></svg>
<div class="a" style="left:99px;top:13px;width:4.5px;height:1.1px;background:#fff;"></div>
<svg style="left:99.00px;top:15.50px" width="5.5" height="3.2"><path d="M0 0H4.5L2.25 2.2Z" fill="#fff"/></svg>
<svg style="left:666.5px;top:10px" width="12" height="9" viewBox="0 0 12 9"><rect x="0.6" y="0.6" width="10.4" height="7.6" fill="none" stroke="#fff" stroke-opacity="0.85" stroke-width="1.1"/><path d="M0.6 2.9H11M5.8 2.9V8.2M3.6 5.6H8" stroke="#fff" stroke-opacity="0.85" stroke-width="1"/></svg>
<div class="a" style="left:704.7px;top:14.1px;width:8px;height:1px;background:rgba(255,255,255,0.85);"></div>
<svg style="left:740px;top:10.5px" width="9" height="9" viewBox="0 0 9 9"><rect x="0.7" y="0.7" width="7.6" height="7.4" rx="0.8" fill="none" stroke="#fff" stroke-opacity="0.85" stroke-width="1.2"/></svg>
<svg style="left:776.2px;top:10.5px" width="9" height="9" viewBox="0 0 9 9"><path d="M0.5 0.5L8 8M8 0.5L0.5 8" stroke="#fff" stroke-opacity="0.9" stroke-width="1.05"/></svg>
<svg style="left:461px;top:37px" width="9" height="11" viewBox="0 0 9 11"><path d="M4 0.7A3.2 3.2 0 0 0 1.8 6.3L2.6 7.4V9H5.6V7.4L6.4 6.3A3.2 3.2 0 0 0 4 0.7Z" fill="none" stroke="#fff" stroke-width="0.9"/><path d="M2.8 10.2H5.4" stroke="#fff" stroke-width="0.9"/></svg>
<svg style="left:724px;top:35.5px" width="13" height="13" viewBox="0 0 13 13"><circle cx="6.4" cy="3.9" r="3.1" fill="none" stroke="#fff" stroke-opacity="0.9" stroke-width="1.2"/><path d="M0.9 11.8A6 6 0 0 1 5.6 7.1" fill="none" stroke="#fff" stroke-opacity="0.9" stroke-width="1.2"/><path d="M7.8 10H12.4M10.1 7.6V12.2" stroke="#fff" stroke-opacity="0.9" stroke-width="1.2"/></svg>
<div class="a" style="left:83.8px;top:57px;width:1px;height:64.5px;background:#dadada;"></div>
<div class="a" style="left:245.1px;top:57px;width:1px;height:64.5px;background:#dadada;"></div>
<div class="a" style="left:340.5px;top:57px;width:1px;height:64.5px;background:#dadada;"></div>
<div class="a" style="left:374.75px;top:57px;width:1px;height:64.5px;background:#dadada;"></div>
<div class="a" style="left:443.25px;top:57px;width:1px;height:64.5px;background:#dadada;"></div>
<div class="a" style="left:574.2px;top:57px;width:1px;height:64.5px;background:#dadada;"></div>
<div class="a" style="left:650.75px;top:57px;width:1px;height:64.5px;background:#dadada;"></div>
<div class="a" style="left:711.0px;top:57px;width:1px;height:64.5px;background:#dadada;"></div>
<div class="a" style="left:151.5px;top:86.4px;width:1px;height:16.599999999999994px;background:#d9d9d9;"></div>
<div class="a" style="left:184.9px;top:86.4px;width:1px;height:16.599999999999994px;background:#d9d9d9;"></div>
<div class="t" style="left:3.70px;top:115px;font-size:8.7px;color:#666;transform:scaleX(1.026);-webkit-text-stroke:0.15px currentColor;">Zwischenablage</div>
<div class="t" style="left:140.20px;top:115px;font-size:8.45px;color:#666;transform:scaleX(1.059);">Schriftart</div>
<div class="t" style="left:280.00px;top:116px;font-size:8.2px;color:#666;transform:scaleX(1.120);">Ausrichtung</div>
<div class="t" style="left:394.75px;top:115px;font-size:8.35px;color:#666;transform:scaleX(1.016);">Zahl</div>
<div class="t" style="left:477.85px;top:115px;font-size:8.35px;color:#666;transform:scaleX(1.065);">Formatvorlagen</div>
<div class="t" style="left:600.60px;top:115px;font-size:8.35px;color:#666;transform:scaleX(1.061);">Zellen</div>
<div class="t" style="left:659.75px;top:115px;font-size:8.35px;color:#666;transform:scaleX(1.074);">Bearbeiten</div>
<svg style="left:75px;top:117px" width="6" height="6" viewBox="0 0 6 6"><path d="M0.5 5V0.5H5" fill="none" stroke="#888" stroke-width="0.8"/><path d="M2 2L5.2 5.2M5.5 2.6V5.5H2.6" fill="none" stroke="#888" stroke-width="0.8"/></svg>
<svg style="left:236.8px;top:117px" width="6" height="6" viewBox="0 0 6 6"><path d="M0.5 5V0.5H5" fill="none" stroke="#888" stroke-width="0.8"/><path d="M2 2L5.2 5.2M5.5 2.6V5.5H2.6" fill="none" stroke="#888" stroke-width="0.8"/></svg>
<svg style="left:366.25px;top:117px" width="6" height="6" viewBox="0 0 6 6"><path d="M0.5 5V0.5H5" fill="none" stroke="#888" stroke-width="0.8"/><path d="M2 2L5.2 5.2M5.5 2.6V5.5H2.6" fill="none" stroke="#888" stroke-width="0.8"/></svg>
<svg style="left:434px;top:117px" width="6" height="6" viewBox="0 0 6 6"><path d="M0.5 5V0.5H5" fill="none" stroke="#888" stroke-width="0.8"/><path d="M2 2L5.2 5.2M5.5 2.6V5.5H2.6" fill="none" stroke="#888" stroke-width="0.8"/></svg>
<svg style="left:783px;top:116px" width="8" height="6" viewBox="0 0 8 6"><path d="M0.8 4.8L3.8 1.5L6.8 4.8" fill="none" stroke="#666" stroke-width="1.3"/></svg>
<svg style="left:784px;top:140.5px" width="8" height="6" viewBox="0 0 8 6"><path d="M0.8 4.8L3.8 1.5L6.8 4.8" fill="none" stroke="#666" stroke-width="1.3"/></svg>
<svg style="left:19px;top:59.5px" width="24" height="24" viewBox="0 0 24 24"><rect x="0.7" y="2.3" width="18.5" height="19.5" rx="1" fill="#eac27b"/><rect x="4.1" y="2.4" width="11.2" height="3.2" rx="1" fill="#666"/><rect x="7.4" y="0.3" width="4.6" height="3.4" rx="1.2" fill="#666"/><rect x="8.9" y="1.3" width="1.6" height="1.3" fill="#e8e8e8"/><path d="M10.8 8.6H18.1L22.3 12.8V23.1H10.8Z" fill="#fff" stroke="#f1f1f1" stroke-width="1.3"/><path d="M11.3 9.1H18L21.8 12.9V22.6H11.3Z" fill="#fff" stroke="#777" stroke-width="0.9"/><path d="M18 9.1V12.9H21.8" fill="none" stroke="#777" stroke-width="0.9"/></svg>
<div class="t" style="left:10.40px;top:87px;font-size:9.9px;color:#444;transform:scaleX(0.921);-webkit-text-stroke:0.15px currentColor;">Einfügen</div>
<svg style="left:26.40px;top:102.40px" width="5.2" height="3.2"><path d="M0 0H4.2L2.1 2.2Z" fill="#666"/></svg>
<svg style="left:51px;top:58.5px" width="14" height="12" viewBox="0 0 14 12"><path d="M4 0.4L9 6.6M9.6 0.4L4.6 6.6" stroke="#555" stroke-width="1.4"/><ellipse cx="3.5" cy="8.9" rx="2.3" ry="2" fill="none" stroke="#4a86c8" stroke-width="1"/><ellipse cx="9.9" cy="8.9" rx="2.3" ry="2" fill="none" stroke="#4a86c8" stroke-width="1"/></svg>
<svg style="left:51px;top:76.5px" width="14" height="12" viewBox="0 0 14 12"><rect x="0.6" y="0.6" width="5.6" height="8.6" fill="#fff" stroke="#888" stroke-width="0.9"/><path d="M2 3H4.6M2 5H4.6" stroke="#4a86c8" stroke-width="0.9"/><path d="M5.6 2.8H10.2L12 4.6V10.9H5.6Z" fill="#fff" stroke="#666" stroke-width="0.9"/><path d="M7 6H10.6M7 7.7H10.6M7 9.4H10.6" stroke="#4a86c8" stroke-width="0.8"/></svg>
<svg style="left:68.90px;top:81.80px" width="4.8" height="2.8"><path d="M0 0H3.8L1.9 1.8Z" fill="#666"/></svg>
<svg style="left:51.5px;top:94px" width="14" height="13" viewBox="0 0 14 13"><path d="M0.6 5.9L3.8 4.3L8.3 8.7L5.5 11.2Z" fill="#eac27b"/><path d="M4.6 3.9L7 2L10.9 6.1L8.7 8.2Z" fill="#6e6e6e"/><circle cx="10.9" cy="2.3" r="1.5" fill="#6e6e6e"/></svg>
<div class="a" style="left:87.6px;top:62.6px;width:86.2px;height:17px;background:#fff;border:1px solid #c6c6c6"></div>
<div class="a" style="left:173.3px;top:62.6px;width:34.4px;height:17px;background:#fff;border:1px solid #c6c6c6"></div>
<div class="t" style="left:89.75px;top:67px;font-size:10.15px;color:#333;transform:scaleX(0.911);-webkit-text-stroke:0.15px currentColor;-webkit-text-stroke:0;">Arial</div>
<div class="t" style="left:176.60px;top:67px;font-size:10.15px;color:#333;transform:scaleX(0.817);-webkit-text-stroke:0.15px currentColor;-webkit-text-stroke:0;">12</div>
<svg style="left:166.40px;top:69.70px" width="5.2" height="3.2"><path d="M0 0H4.2L2.1 2.2Z" fill="#555"/></svg>
<svg style="left:200.10px;top:69.70px" width="5.2" height="3.2"><path d="M0 0H4.2L2.1 2.2Z" fill="#555"/></svg>
<div class="t" style="left:212.90px;top:66px;font-size:10.75px;color:#555;transform:scaleX(0.986);-webkit-text-stroke:0.15px currentColor;">A</div>
<svg style="left:218.5px;top:65px" width="5" height="3.5" viewBox="0 0 5 3.5"><path d="M0.3 3H4.3L2.3 0.5Z" fill="#4a86c8"/></svg>
<div class="t" style="left:230.70px;top:68px;font-size:8.45px;color:#555;transform:scaleX(0.971);">A</div>
<svg style="left:235.6px;top:65px" width="5" height="3.5" viewBox="0 0 5 3.5"><path d="M0.3 0.5H4.3L2.3 3Z" fill="#4a86c8"/></svg>
<div class="t" style="left:94.10px;top:90px;font-size:10px;color:#444;font-weight:bold;transform:scaleX(0.705);">F</div>
<div class="t" style="left:109.70px;top:90px;font-size:10px;color:#444;font-weight:bold;font-style:italic;transform:scaleX(0.803);">K</div>
<div class="t" style="left:126.90px;top:90px;font-size:10px;color:#444;font-weight:bold;transform:scaleX(0.861);">U</div>
<div class="a" style="left:126.4px;top:98.9px;width:7.2px;height:0.9px;background:#777;"></div>
<svg style="left:141.60px;top:94.10px" width="5" height="3"><path d="M0 0H4L2.0 2Z" fill="#555"/></svg>
<svg style="left:157.8px;top:88.5px" width="12" height="12" viewBox="0 0 12 12"><path d="M0.6 0.6H11M0.6 4.9H11M0.6 9.1H11M0.6 0.6V9.1M5.8 0.6V9.1M11 0.6V9.1" fill="none" stroke="#a8a8a8" stroke-width="0.8" stroke-dasharray="1.2 0.6"/><path d="M0.3 10.6H11.3" stroke="#777" stroke-width="1"/></svg>
<svg style="left:174.80px;top:93.95px" width="5.5" height="3.2"><path d="M0 0H4.5L2.25 2.2Z" fill="#555"/></svg>
<svg style="left:191px;top:87.5px" width="14" height="14" viewBox="0 0 14 14"><path d="M2 5.5L6 1.5L10.5 6L6.3 10.2Z" fill="#fff" stroke="#333" stroke-width="1"/><path d="M5 2.5V0.5" stroke="#333" stroke-width="0.9"/><path d="M11 5.5C12.6 7.2 12.6 8.8 11.4 9.6C10.6 9 10.4 7.4 11 5.5Z" fill="#2f6fb7"/><rect x="0" y="10.3" width="13" height="3.2" fill="#ffff00"/></svg>
<svg style="left:208.45px;top:93.95px" width="5.5" height="3.2"><path d="M0 0H4.5L2.25 2.2Z" fill="#555"/></svg>
<div class="t" style="left:220.80px;top:89px;font-size:10.9px;color:#555;transform:scaleX(1.027);-webkit-text-stroke:0.15px currentColor;">A</div>
<div class="a" style="left:218px;top:97.9px;width:12.7px;height:3.1px;background:#ff0000;"></div>
<svg style="left:234.80px;top:94.10px" width="5.5" height="3.2"><path d="M0 0H4.5L2.25 2.2Z" fill="#555"/></svg>
<div class="a" style="left:252.1px;top:64.0px;width:11.000000000000028px;height:1.1px;background:#707070;"></div>
<div class="a" style="left:253px;top:66.8px;width:9.5px;height:1.1px;background:#a9a9a9;"></div>
<div class="a" style="left:252.1px;top:69.0px;width:11.000000000000028px;height:1.1px;background:#707070;"></div>
<div class="a" style="left:269.3px;top:67.1px;width:11.0px;height:1.1px;background:#a9a9a9;"></div>
<div class="a" style="left:270px;top:69.9px;width:9.5px;height:1.1px;background:#707070;"></div>
<div class="a" style="left:269.3px;top:71.9px;width:11.0px;height:1.1px;background:#707070;"></div>
<div class="a" style="left:283.4px;top:62.1px;width:17.5px;height:17.8px;background:#c6c6c6;"></div>
<div class="a" style="left:286.8px;top:70.9px;width:11.0px;height:1.1px;background:#707070;"></div>
<div class="a" style="left:287.5px;top:73.8px;width:9.5px;height:1.1px;background:#a9a9a9;"></div>
<div class="a" style="left:286.8px;top:75.9px;width:11.0px;height:1.1px;background:#707070;"></div>
<svg style="left:303px;top:62px" width="18" height="16" viewBox="0 0 18 16"><text x="0" y="0" font-family="Liberation Sans" font-size="9.4" fill="#3a3a3a" stroke="#3a3a3a" stroke-width="0.25" transform="translate(4.0,13.0) rotate(-45)">ab</text><path d="M7.6 13.6L14.2 7.2" stroke="#555" stroke-width="1"/><path d="M12.6 6.2L15.4 6L15.2 8.8Z" fill="#555"/></svg>
<svg style="left:320.90px;top:70.15px" width="5" height="2.9"><path d="M0 0H4L2.0 1.9Z" fill="#555"/></svg>
<div class="a" style="left:252.1px;top:90.7px;width:11px;height:1.1px;background:#707070;"></div>
<div class="a" style="left:252.1px;top:92.9px;width:7.5px;height:1.1px;background:#707070;"></div>
<div class="a" style="left:252.1px;top:95.3px;width:11px;height:1.1px;background:#a9a9a9;"></div>
<div class="a" style="left:252.1px;top:98.0px;width:7.5px;height:1.1px;background:#707070;"></div>
<div class="a" style="left:269.3px;top:90.7px;width:11px;height:1.1px;background:#707070;"></div>
<div class="a" style="left:271.05px;top:92.9px;width:7.5px;height:1.1px;background:#707070;"></div>
<div class="a" style="left:269.3px;top:95.3px;width:11px;height:1.1px;background:#a9a9a9;"></div>
<div class="a" style="left:271.05px;top:98.0px;width:7.5px;height:1.1px;background:#707070;"></div>
<div class="a" style="left:286.9px;top:90.7px;width:11px;height:1.1px;background:#707070;"></div>
<div class="a" style="left:290.4px;top:92.9px;width:7.5px;height:1.1px;background:#707070;"></div>
<div class="a" style="left:286.9px;top:95.3px;width:11px;height:1.1px;background:#a9a9a9;"></div>
<div class="a" style="left:290.4px;top:98.0px;width:7.5px;height:1.1px;background:#707070;"></div>
<div class="a" style="left:305.2px;top:88.8px;width:12.6px;height:1.1px;background:#707070;"></div>
<div class="a" style="left:305.2px;top:98.8px;width:12.6px;height:1.1px;background:#a9a9a9;"></div>
<div class="a" style="left:311.7px;top:91.2px;width:6.1px;height:1.1px;background:#a9a9a9;"></div>
<div class="a" style="left:311.7px;top:93.6px;width:6.1px;height:1.1px;background:#707070;"></div>
<div class="a" style="left:311.7px;top:96px;width:6.1px;height:1.1px;background:#707070;"></div>
<svg style="left:305.2px;top:91px" width="7" height="6" viewBox="0 0 7 6"><path d="M0.3 2.8L3 0.5V2H6V3.6H3V5.1Z" fill="#3d7cc9"/></svg>
<div class="a" style="left:322.7px;top:88.8px;width:12.6px;height:1.1px;background:#707070;"></div>
<div class="a" style="left:322.7px;top:98.8px;width:12.6px;height:1.1px;background:#a9a9a9;"></div>
<div class="a" style="left:329.2px;top:91.2px;width:6.1px;height:1.1px;background:#a9a9a9;"></div>
<div class="a" style="left:329.2px;top:93.6px;width:6.1px;height:1.1px;background:#707070;"></div>
<div class="a" style="left:329.2px;top:96px;width:6.1px;height:1.1px;background:#707070;"></div>
<svg style="left:322.7px;top:91px" width="7" height="6" viewBox="0 0 7 6"><path d="M6 2.8L3.3 0.5V2H0.3V3.6H3.3V5.1Z" fill="#3d7cc9"/></svg>
<svg style="left:346.5px;top:63.5px" width="15" height="13" viewBox="0 0 15 13"><rect x="0.8" y="0.8" width="8.2" height="11.2" fill="#fff" stroke="#777" stroke-width="0.9"/><rect x="1.2" y="1.2" width="7.4" height="3.6" fill="#d0d0d0"/><path d="M1.3 3.6H11M1.8 7.4H6.8M1.8 9.6H6.8" stroke="#3d7cc9" stroke-width="0.9"/><path d="M12.2 3.8C14 5.6 13.4 8.4 10.2 9.4" fill="none" stroke="#3d7cc9" stroke-width="1"/><path d="M10.8 7.6L9.6 9.5L11.4 10.9" fill="none" stroke="#3d7cc9" stroke-width="0.9"/></svg>
<svg style="left:346.5px;top:87.8px" width="13" height="13" viewBox="0 0 13 13"><rect x="0.8" y="0.8" width="11.4" height="11.2" fill="#fff" stroke="#777" stroke-width="0.9"/><path d="M0.8 3.2H12.2M0.8 9.6H12.2M6.5 0.8V3.2M6.5 9.6V12" stroke="#777" stroke-width="0.9"/><path d="M2.3 6.4H10.7" stroke="#3d7cc9" stroke-width="0.9"/><path d="M3.6 5L2 6.4L3.6 7.8M9.4 5L11 6.4L9.4 7.8" fill="none" stroke="#3d7cc9" stroke-width="0.9"/></svg>
<svg style="left:364.00px;top:93.90px" width="5.2" height="3"><path d="M0 0H4.2L2.1 2Z" fill="#555"/></svg>
<div class="a" style="left:379px;top:56.25px;width:61px;height:17.2px;background:#fff;border:1px solid #c6c6c6"></div>
<div class="t" style="left:381.50px;top:60px;font-size:9.6px;color:#333;transform:scaleX(0.942);-webkit-text-stroke:0.15px currentColor;-webkit-text-stroke:0;">Text</div>
<svg style="left:432.20px;top:63.70px" width="5" height="3"><path d="M0 0H4L2.0 2Z" fill="#555"/></svg>
<svg style="left:380.8px;top:76px" width="14" height="14" viewBox="0 0 14 14"><rect x="0.8" y="0.8" width="12.2" height="5.8" fill="#fff" stroke="#3d7cc9" stroke-width="1.5"/><ellipse cx="6.9" cy="3.7" rx="1.8" ry="1.6" fill="#3d7cc9"/><path d="M5 7.2H10.5M5.3 8.8H10.2M3 10.4H8.5M3.3 12H8.2" stroke="#eab364" stroke-width="1"/></svg>
<svg style="left:398.40px;top:81.80px" width="5" height="3"><path d="M0 0H4L2.0 2Z" fill="#555"/></svg>
<div class="t" style="left:409.60px;top:77px;font-size:12.8px;color:#444;transform:scaleX(0.878);-webkit-text-stroke:0.15px currentColor;">%</div>
<div class="t" style="left:425.60px;top:79px;font-size:8.15px;color:#444;transform:scaleX(0.852);">000</div>
<svg style="left:380.8px;top:94px" width="13" height="13" viewBox="0 0 13 13"><path d="M0.4 2.8L3 0.6V2.1H6V3.5H3V5Z" fill="#3d7cc9"/><text x="5.2" y="5.6" font-family="Liberation Sans" font-size="6.6" fill="#444">,0</text><text x="1.2" y="11.4" font-family="Liberation Sans" font-size="6.6" fill="#444">,00</text></svg>
<svg style="left:398.2px;top:94px" width="13" height="13" viewBox="0 0 13 13"><text x="1.8" y="5.6" font-family="Liberation Sans" font-size="6.6" fill="#444">,00</text><path d="M5.8 9L3.2 6.8V8.2H0.3V9.7H3.2V11.1Z" fill="#3d7cc9"/><text x="5.4" y="11.4" font-family="Liberation Sans" font-size="6.6" fill="#444">,0</text></svg>
<svg style="left:448.5px;top:58px" width="14" height="13" viewBox="0 0 14 13"><rect x="0.6" y="0.6" width="10.4" height="9.4" fill="#fff" stroke="#777" stroke-width="0.9"/><rect x="1" y="1" width="3.6" height="2.8" fill="#e0502e"/><rect x="1" y="4.2" width="6.2" height="2.5" fill="#4a7fc1"/><rect x="1" y="7.1" width="3.6" height="2.6" fill="#e0502e"/><path d="M0.6 3.9H11M0.6 6.9H11M4.8 0.6V10M7.6 0.6V10" stroke="#999" stroke-width="0.6"/><rect x="5.8" y="5.8" width="7.6" height="6.8" fill="#fff" stroke="#666" stroke-width="0.9"/><path d="M8 8.5H11.2L9.6 10.5Z" fill="#555"/></svg>
<div class="t" style="left:464.90px;top:60px;font-size:9.6px;color:#444;transform:scaleX(0.967);-webkit-text-stroke:0.15px currentColor;">Bedingte Formatierung</div>
<svg style="left:561.60px;top:63.65px" width="4.8" height="2.9"><path d="M0 0H3.8L1.9 1.9Z" fill="#666"/></svg>
<svg style="left:448.5px;top:75.5px" width="14" height="14" viewBox="0 0 14 14"><rect x="0.6" y="0.6" width="12" height="10" fill="#fff" stroke="#777" stroke-width="0.9"/><rect x="1" y="3.5" width="11" height="6.8" fill="#c5d9ef"/><path d="M0.6 3.3H12.6M0.6 5.9H12.6M0.6 8.3H12.6M4.4 0.6V10.6M8.4 0.6V10.6" stroke="#999" stroke-width="0.6"/><path d="M13.2 3L10.2 8L8.6 7.2Z" fill="#777"/><path d="M3 13.4C4 11 6 9.4 8.6 8.6C9.4 10.8 7.4 13 3 13.4Z" fill="#3d7cc9"/></svg>
<div class="t" style="left:464.40px;top:78px;font-size:9.45px;color:#444;transform:scaleX(0.980);-webkit-text-stroke:0.15px currentColor;">Als Tabelle formatieren</div>
<svg style="left:560.60px;top:81.45px" width="4.8" height="2.9"><path d="M0 0H3.8L1.9 1.9Z" fill="#666"/></svg>
<svg style="left:448.5px;top:93.5px" width="14" height="14" viewBox="0 0 14 14"><rect x="0.6" y="0.6" width="12" height="10" fill="#fff" stroke="#777" stroke-width="0.9"/><rect x="1.6" y="1.8" width="10" height="7.6" fill="#c5d9ef"/><path d="M13.2 3L10.2 8L8.6 7.2Z" fill="#777"/><path d="M3 13.4C4 11 6 9.4 8.6 8.6C9.4 10.8 7.4 13 3 13.4Z" fill="#3d7cc9"/></svg>
<div class="t" style="left:464.40px;top:96px;font-size:9.95px;color:#444;transform:scaleX(0.945);-webkit-text-stroke:0.15px currentColor;">Zellenformatvorlagen</div>
<svg style="left:555.10px;top:99.25px" width="4.8" height="2.9"><path d="M0 0H3.8L1.9 1.9Z" fill="#666"/></svg>
<svg style="left:579.8px;top:58px" width="14" height="13" viewBox="0 0 14 13"><path d="M0.6 0.6H7.4V3H0.6Z M0.6 8.8H7.4V12H0.6Z M4 8.8V12" fill="none" stroke="#c8c8c8" stroke-width="0.9"/><path d="M5.6 4.4H12.6V6.8H5.6ZM9.1 4.4V6.8" fill="none" stroke="#c8c8c8" stroke-width="0.9"/><path d="M0.6 5.6H5M2.4 4L0.8 5.6L2.4 7.2" fill="none" stroke="#c8c8c8" stroke-width="0.9"/></svg>
<div class="t" style="left:595.60px;top:61px;font-size:8.5px;color:#b4b4b4;transform:scaleX(1.081);-webkit-text-stroke:0.15px currentColor;">Einfügen</div>
<svg style="left:639.50px;top:63.60px" width="5" height="3"><path d="M0 0H4L2.0 2Z" fill="#888"/></svg>
<svg style="left:579.8px;top:75.8px" width="14" height="13" viewBox="0 0 14 13"><path d="M0.6 0.6H7.4V3H0.6Z M0.6 9H7.4V12.2H0.6Z M4 9V12.2" fill="none" stroke="#777" stroke-width="0.9"/><rect x="0.6" y="4.6" width="6.4" height="2.6" fill="#c5d9ef" stroke="#777" stroke-width="0.9"/><path d="M7.6 3.2L12.6 8.2M12.6 3.2L7.6 8.2" stroke="#e0502e" stroke-width="1.3"/></svg>
<div class="t" style="left:595.60px;top:78px;font-size:9.6px;color:#444;transform:scaleX(0.920);-webkit-text-stroke:0.15px currentColor;">Löschen</div>
<svg style="left:637.50px;top:81.40px" width="5" height="3"><path d="M0 0H4L2.0 2Z" fill="#666"/></svg>
<svg style="left:580.2px;top:94.5px" width="13" height="12" viewBox="0 0 13 12"><path d="M0.4 0.6H11.4" stroke="#3d7cc9" stroke-width="0.8" stroke-dasharray="1.4 0.6"/><rect x="0.6" y="2.6" width="11" height="7.6" fill="#fff" stroke="#777" stroke-width="0.9"/><path d="M0.6 5H11.6M0.6 7.6H11.6M3.6 2.6V10.2M8.4 2.6V10.2" stroke="#999" stroke-width="0.6"/><rect x="3.8" y="5.2" width="4.4" height="2.4" fill="#3d7cc9"/><path d="M1 11.4H4.4M6.2 11.4H11" stroke="#777" stroke-width="0.8"/></svg>
<div class="t" style="left:595.60px;top:96px;font-size:9.45px;color:#444;transform:scaleX(0.983);-webkit-text-stroke:0.15px currentColor;">Format</div>
<svg style="left:627.60px;top:99.25px" width="4.8" height="2.9"><path d="M0 0H3.8L1.9 1.9Z" fill="#666"/></svg>
<svg style="left:656.5px;top:58px" width="13" height="13" viewBox="0 0 13 13"><path d="M11.6 1.9V0.8H1.2L6.4 6.2L1.2 11.4H11.6V10.3" fill="none" stroke="#444" stroke-width="1.7" stroke-linejoin="miter"/></svg>
<svg style="left:674.10px;top:63.70px" width="5" height="3"><path d="M0 0H4L2.0 2Z" fill="#555"/></svg>
<div class="t" style="left:685.25px;top:58px;font-size:7.85px;color:#3d7cc9;font-weight:bold;transform:scaleX(0.796);">A</div>
<div class="t" style="left:685.25px;top:65px;font-size:7.85px;color:#8a52b0;font-weight:bold;transform:scaleX(0.940);">Z</div>
<svg style="left:691.5px;top:62px" width="6" height="6" viewBox="0 0 6 6"><path d="M0.3 0.5H5.5L3.7 2.6V5.5L2.1 4.8V2.6Z" fill="#555"/></svg>
<svg style="left:700.10px;top:63.70px" width="5" height="3"><path d="M0 0H4L2.0 2Z" fill="#555"/></svg>
<svg style="left:657.5px;top:76px" width="12" height="13.5" viewBox="0 0 12 13.5"><rect x="0.6" y="0.6" width="10.6" height="12" fill="#fff" stroke="#777" stroke-width="0.9"/><rect x="0.6" y="0.6" width="10.6" height="2.2" fill="#777"/><path d="M5.9 4.8V10.6M3.4 8.2L5.9 10.7L8.4 8.2" fill="none" stroke="#3d7cc9" stroke-width="1.4"/></svg>
<svg style="left:672.60px;top:81.50px" width="5" height="3"><path d="M0 0H4L2.0 2Z" fill="#555"/></svg>
<svg style="left:684.5px;top:77px" width="12" height="11" viewBox="0 0 12 11"><circle cx="6.8" cy="4.2" r="3.2" fill="none" stroke="#3d7cc9" stroke-width="1.4"/><path d="M4.6 6.5L1 10" stroke="#3d7cc9" stroke-width="1.8"/></svg>
<svg style="left:700.10px;top:81.50px" width="5" height="3"><path d="M0 0H4L2.0 2Z" fill="#555"/></svg>
<svg style="left:657.3px;top:94.5px" width="12" height="11" viewBox="0 0 12 11"><path d="M7.2 0.8L11 4.4L5.6 9.8L1.8 6.2Z" fill="#e8778f"/><path d="M1.8 6.2L5.6 9.8L4.4 10.6C3.6 10.6 1.6 8.8 0.8 7.8Z" fill="#e8778f" opacity="0.8"/><path d="M2.5 5.5L6.3 9.1" stroke="#fff" stroke-width="0.7"/></svg>
<svg style="left:672.60px;top:99.30px" width="5" height="3"><path d="M0 0H4L2.0 2Z" fill="#555"/></svg>
<div class="a" style="left:0px;top:0px;width:800px;height:1.5px;background:#0c1f33;"></div>
<div class="a" style="left:0px;top:0px;width:1.5px;height:570px;background:#12302e;"></div>
<div class="a" style="left:798.5px;top:0px;width:1.5px;height:570px;background:#12302e;"></div>
<div class="a" style="left:797.7px;top:53px;width:0.8px;height:516px;background:#7fa894;"></div>
<div class="a" style="left:0px;top:568.5px;width:800px;height:1.5px;background:#12302e;"></div>
</div></body></html>
